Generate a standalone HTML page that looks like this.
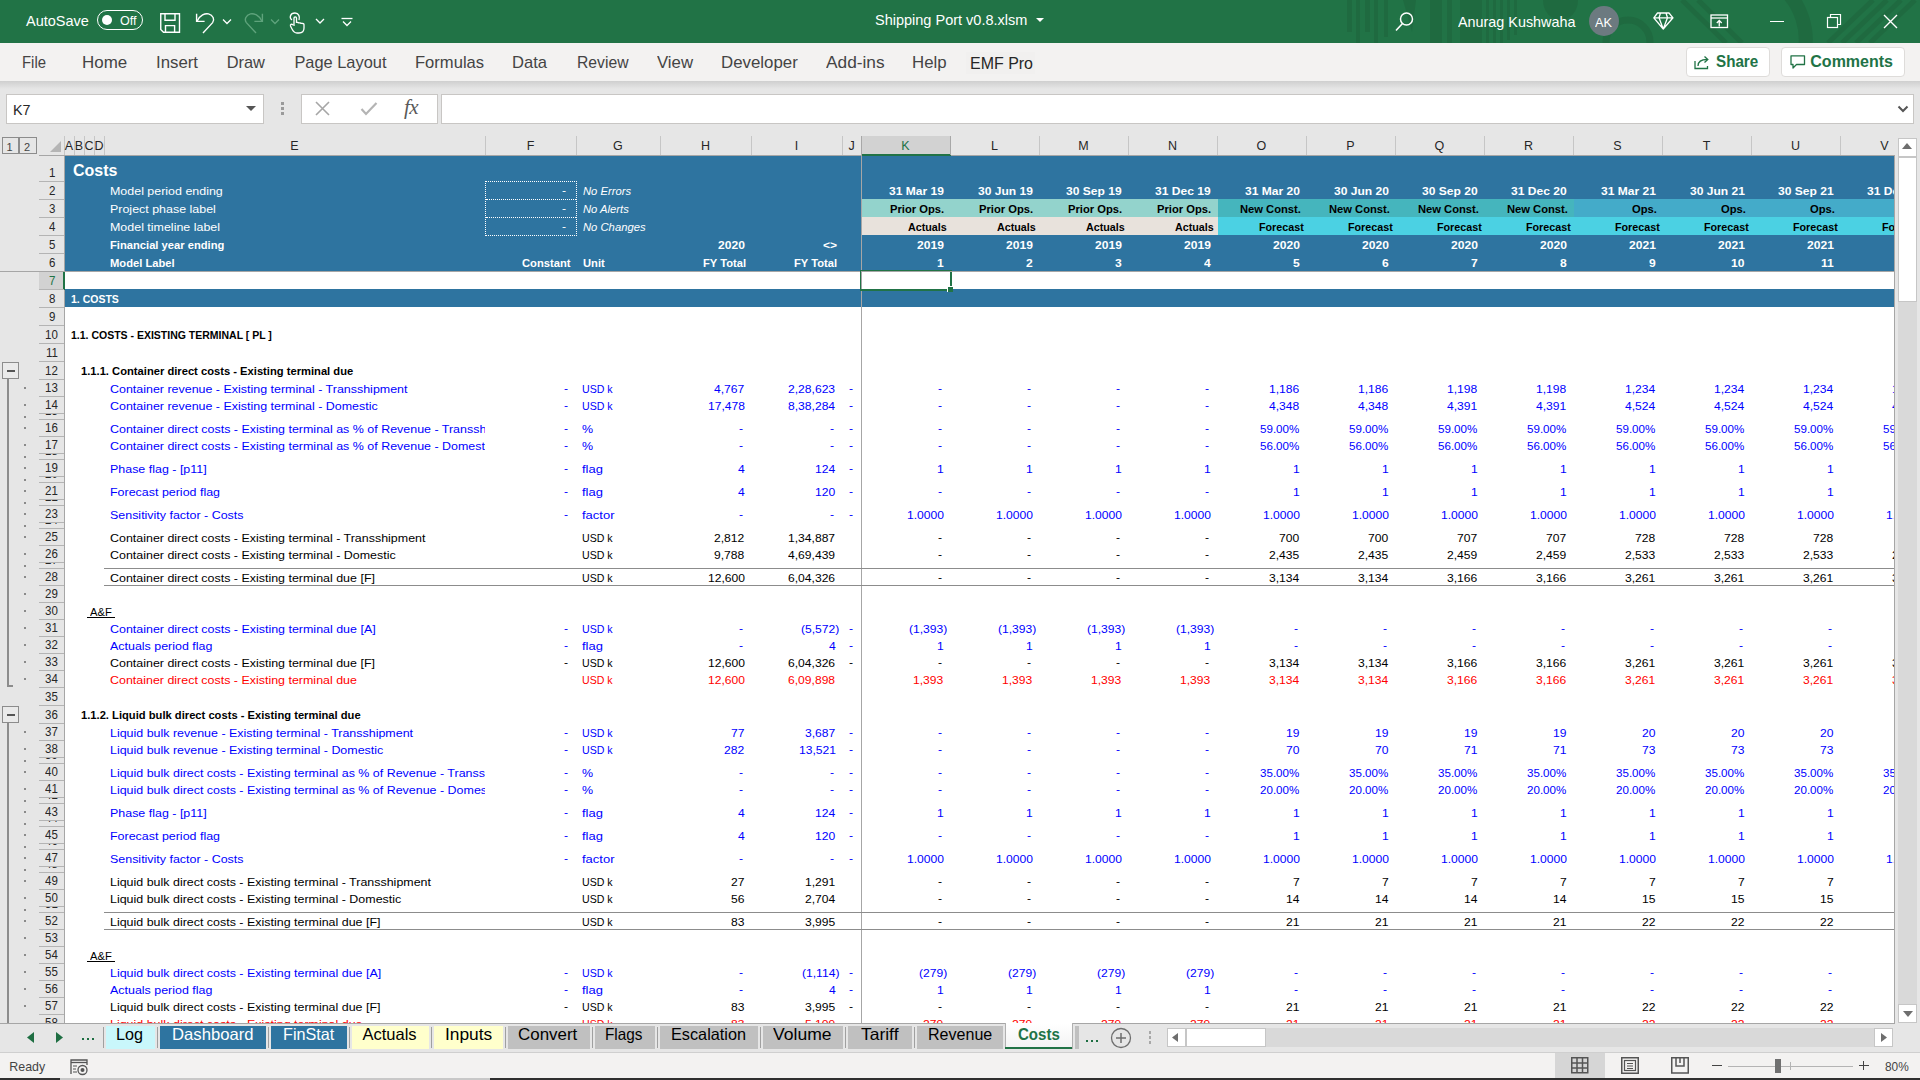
<!DOCTYPE html><html><head><meta charset="utf-8"><title>Shipping Port v0.8.xlsm - Excel</title><style>
html,body{margin:0;padding:0;width:1920px;height:1080px;overflow:hidden;background:#e6e6e6;}
body{position:relative;font-family:"Liberation Sans", sans-serif;}
.t{position:absolute;white-space:nowrap;line-height:20px;height:20px;}
.r{position:absolute;}
svg{position:absolute;overflow:visible;}
</style></head><body>
<div class="r" style="left:0px;top:0px;width:1920px;height:43px;background:#217346;"></div>
<svg style="left:0;top:0" width="1920" height="43" viewBox="0 0 1920 43"><g fill="#1f6a40"><rect x="1347" y="0" width="5" height="32"/><rect x="1356" y="0" width="4" height="43"/><rect x="1365" y="0" width="5" height="32"/><rect x="1374" y="0" width="4" height="43"/><rect x="1384" y="0" width="4" height="37"/><path d="M1403 0 H1416 L1412 32 Z"/><rect x="1430" y="0" width="12" height="43"/><rect x="1447" y="0" width="5" height="43"/><rect x="1460" y="0" width="22" height="43"/><rect x="1486" y="0" width="3" height="43"/><rect x="1493" y="0" width="3" height="43"/><rect x="1500" y="0" width="3" height="43"/><rect x="1507" y="0" width="3" height="40"/><rect x="1514" y="0" width="3" height="35"/><path d="M1543 0 H1578 A17.5 20 0 0 1 1543 0 Z"/></g><circle cx="1628" cy="42" r="22" fill="none" stroke="#1f6a40" stroke-width="7"/><g stroke="#1f6a40" stroke-width="5"><line x1="1682" y1="0" x2="1726" y2="43"/><line x1="1698" y1="0" x2="1742" y2="43"/><line x1="1828" y1="43" x2="1873" y2="0"/><line x1="1842" y1="43" x2="1887" y2="0"/><line x1="1856" y1="43" x2="1901" y2="0"/><line x1="1870" y1="43" x2="1915" y2="0"/></g><path d="M1785 -10 A70 70 0 0 1 1805 50" fill="none" stroke="#1f6a40" stroke-width="14"/></svg>
<div class="t" style="left:26px;top:11px;font-size:14.5px;color:#ffffff;">AutoSave</div>
<div class="r" style="left:97px;top:10px;width:44px;height:18px;border:1.5px solid #fff;border-radius:11px;"></div>
<div class="r" style="left:102px;top:15px;width:10px;height:10px;background:#fff;border-radius:50%;"></div>
<div class="t" style="left:120px;top:11px;font-size:13px;color:#ffffff;transform:scaleX(0.9649);transform-origin:0 0;">Off</div>
<svg style="left:160px;top:13px" width="21" height="21" viewBox="0 0 21 21"><path d="M0.75 0.75 H19.5 V19.3 H3.5 L0.75 16.5 Z" fill="none" stroke="#fff" stroke-width="1.4"/><path d="M5 0.75 V7.3 H15 V0.75" fill="none" stroke="#fff" stroke-width="1.4"/><path d="M5.5 19.3 V12.6 H14.6 V19.3" fill="none" stroke="#fff" stroke-width="1.4"/></svg>
<svg style="left:195px;top:13px" width="22" height="22" viewBox="0 0 22 22"><path d="M1.6 0.8 V8.4 H9.6" fill="none" stroke="#fff" stroke-width="1.4"/><path d="M2.2 8 C5 2 10 0.2 13.5 0.9 C18 2 20 6.5 17.6 9.6 L8 20" fill="none" stroke="#fff" stroke-width="1.4"/></svg>
<svg style="left:222px;top:18px" width="10" height="8" viewBox="0 0 10 8"><path d="M1 1.5 L5 5.5 L9 1.5" fill="none" stroke="#fff" stroke-width="1.3"/></svg>
<svg style="left:243px;top:13px" width="22" height="22" viewBox="0 0 22 22"><path d="M19.4 0.8 V8.4 H11.4" fill="none" stroke="#5fa37c" stroke-width="1.4"/><path d="M18.8 8 C16 2 11 0.2 7.5 0.9 C3 2 1 6.5 3.4 9.6 L13 20" fill="none" stroke="#5fa37c" stroke-width="1.4"/></svg>
<svg style="left:270px;top:18px" width="10" height="8" viewBox="0 0 10 8"><path d="M1 1.5 L5 5.5 L9 1.5" fill="none" stroke="#5fa37c" stroke-width="1.3"/></svg>
<svg style="left:288px;top:12px" width="18" height="22" viewBox="0 0 18 22"><path d="M4 8 C1 6 2 1 7 1 C11 1 12 5 11 8" fill="none" stroke="#fff" stroke-width="1.3"/><path d="M6 14 V6 C6 4.5 8.5 4.5 8.5 6 V11 C8.5 10 11 10 11 11.5 C11 10.5 13.5 10.5 13.5 12 C13.5 11 16 11 16 12.5 V16 C16 19 14 21 11 21 H9 C7 21 5 19 4 17 L2.5 14 C2 12.5 3.5 11.5 5 13" fill="none" stroke="#fff" stroke-width="1.3"/></svg>
<svg style="left:315px;top:17px" width="10" height="8" viewBox="0 0 10 8"><path d="M1 2 L5 6 L9 2" fill="none" stroke="#fff" stroke-width="1.3"/></svg>
<svg style="left:340px;top:14px" width="14" height="14" viewBox="0 0 14 14"><path d="M1.5 4.5 H12.5" stroke="#fff" stroke-width="1.3"/><path d="M3 7.5 L7 11.5 L11 7.5" fill="none" stroke="#fff" stroke-width="1.3"/></svg>
<div class="t" style="left:875px;top:10px;font-size:14.5px;color:#ffffff;">Shipping Port v0.8.xlsm</div>
<svg style="left:1036px;top:18px" width="8" height="5" viewBox="0 0 8 5"><path d="M0 0 H8 L4 4 Z" fill="#fff"/></svg>
<svg style="left:1394px;top:11px" width="22" height="22" viewBox="0 0 22 22"><circle cx="12.5" cy="8" r="6" fill="none" stroke="#fff" stroke-width="1.5"/><path d="M8.5 12.5 L2 19.5" stroke="#fff" stroke-width="1.6"/></svg>
<div class="t" style="left:1458px;top:12px;font-size:14.5px;color:#ffffff;transform:scaleX(0.9907);transform-origin:0 0;">Anurag Kushwaha</div>
<div class="r" style="left:1589px;top:6px;width:30px;height:30px;border-radius:50%;background:#6c7a80;"></div>
<div class="t" style="left:1595px;top:13px;font-size:13px;color:#ffffff;transform:scaleX(0.9803);transform-origin:0 0;">AK</div>
<svg style="left:1653px;top:12px" width="21" height="18" viewBox="0 0 21 18"><path d="M4.5 1 H16 L20 5.8 L10.25 17 L0.8 5.8 Z M0.8 5.8 H20 M7.5 1 L6 5.8 L10.25 17 L14.5 5.8 L13 1" fill="none" stroke="#fff" stroke-width="1.3" stroke-linejoin="round"/></svg>
<svg style="left:1710px;top:14px" width="19" height="15" viewBox="0 0 19 15"><rect x="1" y="1" width="16.5" height="12.5" fill="none" stroke="#fff" stroke-width="1.3"/><path d="M1 4 H17.5" stroke="#fff" stroke-width="1.3"/><path d="M9.25 12.5 V6.5 M6.8 9 L9.25 6.5 L11.7 9" fill="none" stroke="#fff" stroke-width="1.3"/></svg>
<div class="r" style="left:1770px;top:21px;width:14px;height:1px;background:#ffffff;"></div>
<svg style="left:1826px;top:13px" width="16" height="16" viewBox="0 0 16 16"><rect x="1.5" y="4.5" width="10" height="10" fill="none" stroke="#fff" stroke-width="1.2"/><path d="M4.5 4.5 V1.5 H14.5 V11.5 H11.5" fill="none" stroke="#fff" stroke-width="1.2"/></svg>
<svg style="left:1883px;top:14px" width="15" height="15" viewBox="0 0 15 15"><path d="M1 1 L14 14 M14 1 L1 14" stroke="#fff" stroke-width="1.4"/></svg>
<div class="r" style="left:0px;top:43px;width:1920px;height:38px;background:#f3f2f1;"></div>
<div class="r" style="left:0;top:81px;width:1920px;height:8px;background:linear-gradient(#cfcfcf,#e6e6e6);"></div>
<div class="t" style="left:21.5px;top:52px;font-size:16.4px;color:#444444;transform:scaleX(0.9082);transform-origin:0 0;">File</div>
<div class="t" style="left:82.3px;top:52px;font-size:16.4px;color:#444444;transform:scaleX(1.0332);transform-origin:0 0;">Home</div>
<div class="t" style="left:156px;top:52px;font-size:16.4px;color:#444444;transform:scaleX(1.0240);transform-origin:0 0;">Insert</div>
<div class="t" style="left:226.7px;top:52px;font-size:16.4px;color:#444444;">Draw</div>
<div class="t" style="left:294.4px;top:52px;font-size:16.4px;color:#444444;">Page Layout</div>
<div class="t" style="left:414.7px;top:52px;font-size:16.4px;color:#444444;transform:scaleX(1.0110);transform-origin:0 0;">Formulas</div>
<div class="t" style="left:512px;top:52px;font-size:16.4px;color:#444444;transform:scaleX(1.0103);transform-origin:0 0;">Data</div>
<div class="t" style="left:576.5px;top:52px;font-size:16.4px;color:#444444;transform:scaleX(0.9577);transform-origin:0 0;">Review</div>
<div class="t" style="left:657px;top:52px;font-size:16.4px;color:#444444;transform:scaleX(1.0213);transform-origin:0 0;">View</div>
<div class="t" style="left:721px;top:52px;font-size:16.4px;color:#444444;transform:scaleX(1.0274);transform-origin:0 0;">Developer</div>
<div class="t" style="left:826px;top:52px;font-size:16.4px;color:#444444;transform:scaleX(1.0538);transform-origin:0 0;">Add-ins</div>
<div class="t" style="left:912px;top:52px;font-size:16.4px;color:#444444;transform:scaleX(1.0258);transform-origin:0 0;">Help</div>
<div class="r" style="left:966px;top:52px;width:69px;height:22px;background:#f1f0ef;"></div>
<div class="t" style="left:969.6px;top:53px;font-size:16.4px;color:#262626;transform:scaleX(0.9738);transform-origin:0 0;">EMF Pro</div>
<div class="r" style="left:1686px;top:47px;width:82px;height:28px;background:#fff;border:1px solid #dedcda;border-radius:4px;"></div>
<svg style="left:1694px;top:53px" width="16" height="17" viewBox="0 0 16 17"><path d="M1 8 V15.5 H13.5 V13" fill="none" stroke="#217346" stroke-width="1.3"/><path d="M4 13 C4 8.5 7 6.5 13 6.5" fill="none" stroke="#217346" stroke-width="1.3"/><path d="M10.5 3.5 L13.8 6.5 L10.5 9.5" fill="none" stroke="#217346" stroke-width="1.3"/></svg>
<div class="t" style="left:1715.5px;top:52px;font-size:16px;color:#217346;font-weight:bold;transform:scaleX(0.9490);transform-origin:0 0;">Share</div>
<div class="r" style="left:1781px;top:47px;width:122px;height:28px;background:#fff;border:1px solid #dedcda;border-radius:4px;"></div>
<svg style="left:1790px;top:55px" width="16" height="15" viewBox="0 0 16 15"><path d="M1 0.8 H14.5 V9.5 H6.5 L3 13 V9.5 H1 Z" fill="none" stroke="#217346" stroke-width="1.3" stroke-linejoin="round"/></svg>
<div class="t" style="left:1810.3px;top:52px;font-size:16px;color:#217346;font-weight:bold;">Comments</div>
<div class="r" style="left:6px;top:94px;width:256px;height:28px;background:#fff;border:1px solid #c8c6c4;"></div>
<div class="t" style="left:13px;top:100px;font-size:15px;color:#262626;transform:scaleX(0.9538);transform-origin:0 0;">K7</div>
<svg style="left:246px;top:106px" width="10" height="6" viewBox="0 0 10 6"><path d="M0 0 H10 L5 5 Z" fill="#555"/></svg>
<div class="r" style="left:281px;top:102px;width:3px;height:3px;background:#9a9a9a;"></div>
<div class="r" style="left:281px;top:107px;width:3px;height:3px;background:#9a9a9a;"></div>
<div class="r" style="left:281px;top:112px;width:3px;height:3px;background:#9a9a9a;"></div>
<div class="r" style="left:301px;top:94px;width:135px;height:28px;background:#fff;border:1px solid #c8c6c4;"></div>
<svg style="left:315px;top:101px" width="15" height="15" viewBox="0 0 15 15"><path d="M1 1 L14 14 M14 1 L1 14" stroke="#a6a6a6" stroke-width="1.6"/></svg>
<svg style="left:360px;top:101px" width="18" height="15" viewBox="0 0 18 15"><path d="M1.5 8 L6 13 L16.5 2" fill="none" stroke="#b4b4b4" stroke-width="2.2"/></svg>
<div class="t" style="left:404px;top:97px;font-family:'Liberation Serif',serif;font-style:italic;font-size:21px;color:#5a5a5a;letter-spacing:-0.5px;">fx</div>
<div class="r" style="left:441px;top:94px;width:1471px;height:28px;background:#fff;border:1px solid #c8c6c4;"></div>
<svg style="left:1897px;top:105px" width="12" height="8" viewBox="0 0 12 8"><path d="M1.5 1.5 L6 6 L10.5 1.5" fill="none" stroke="#555" stroke-width="2"/></svg>
<div class="r" style="left:0px;top:124px;width:1920px;height:12px;background:#e6e6e6;"></div>
<div class="r" style="left:39px;top:136px;width:1855px;height:19px;background:#e6e6e6;"></div>
<div class="r" style="left:39px;top:155px;width:1855px;height:1px;background:#a6a6a6;"></div>
<div class="r" style="left:64px;top:136px;width:1px;height:19px;background:#c6c6c6;"></div>
<div class="t" style="left:64.8px;top:136px;font-size:12.5px;color:#262626;">A</div>
<div class="r" style="left:74px;top:136px;width:1px;height:19px;background:#c6c6c6;"></div>
<div class="t" style="left:74.8px;top:136px;font-size:12.5px;color:#262626;">B</div>
<div class="r" style="left:84px;top:136px;width:1px;height:19px;background:#c6c6c6;"></div>
<div class="t" style="left:84.5px;top:136px;font-size:12.5px;color:#262626;">C</div>
<div class="r" style="left:94px;top:136px;width:1px;height:19px;background:#c6c6c6;"></div>
<div class="t" style="left:94.5px;top:136px;font-size:12.5px;color:#262626;">D</div>
<div class="r" style="left:104px;top:136px;width:1px;height:19px;background:#c6c6c6;"></div>
<div class="t" style="left:290.3px;top:136px;font-size:12.5px;color:#262626;">E</div>
<div class="r" style="left:485px;top:136px;width:1px;height:19px;background:#c6c6c6;"></div>
<div class="t" style="left:526.7px;top:136px;font-size:12.5px;color:#262626;">F</div>
<div class="r" style="left:576px;top:136px;width:1px;height:19px;background:#c6c6c6;"></div>
<div class="t" style="left:613.1px;top:136px;font-size:12.5px;color:#262626;">G</div>
<div class="r" style="left:660px;top:136px;width:1px;height:19px;background:#c6c6c6;"></div>
<div class="t" style="left:701.0px;top:136px;font-size:12.5px;color:#262626;">H</div>
<div class="r" style="left:751px;top:136px;width:1px;height:19px;background:#c6c6c6;"></div>
<div class="t" style="left:794.8px;top:136px;font-size:12.5px;color:#262626;">I</div>
<div class="r" style="left:842px;top:136px;width:1px;height:19px;background:#c6c6c6;"></div>
<div class="t" style="left:848.4px;top:136px;font-size:12.5px;color:#262626;">J</div>
<div class="r" style="left:862px;top:136px;width:88px;height:19px;background:#d2d2d2;"></div>
<div class="r" style="left:862px;top:154px;width:89px;height:2px;background:#217346;"></div>
<div class="r" style="left:861px;top:136px;width:1px;height:19px;background:#a8a8a8;"></div>
<div class="t" style="left:901.3px;top:136px;font-size:12.5px;color:#217346;">K</div>
<div class="r" style="left:950px;top:136px;width:1px;height:19px;background:#a8a8a8;"></div>
<div class="t" style="left:991.0px;top:136px;font-size:12.5px;color:#262626;">L</div>
<div class="r" style="left:1039px;top:136px;width:1px;height:19px;background:#c6c6c6;"></div>
<div class="t" style="left:1078.3px;top:136px;font-size:12.5px;color:#262626;">M</div>
<div class="r" style="left:1128px;top:136px;width:1px;height:19px;background:#c6c6c6;"></div>
<div class="t" style="left:1168.0px;top:136px;font-size:12.5px;color:#262626;">N</div>
<div class="r" style="left:1217px;top:136px;width:1px;height:19px;background:#c6c6c6;"></div>
<div class="t" style="left:1256.6px;top:136px;font-size:12.5px;color:#262626;">O</div>
<div class="r" style="left:1306px;top:136px;width:1px;height:19px;background:#c6c6c6;"></div>
<div class="t" style="left:1346.3px;top:136px;font-size:12.5px;color:#262626;">P</div>
<div class="r" style="left:1395px;top:136px;width:1px;height:19px;background:#c6c6c6;"></div>
<div class="t" style="left:1434.6px;top:136px;font-size:12.5px;color:#262626;">Q</div>
<div class="r" style="left:1484px;top:136px;width:1px;height:19px;background:#c6c6c6;"></div>
<div class="t" style="left:1524.0px;top:136px;font-size:12.5px;color:#262626;">R</div>
<div class="r" style="left:1573px;top:136px;width:1px;height:19px;background:#c6c6c6;"></div>
<div class="t" style="left:1613.3px;top:136px;font-size:12.5px;color:#262626;">S</div>
<div class="r" style="left:1662px;top:136px;width:1px;height:19px;background:#c6c6c6;"></div>
<div class="t" style="left:1702.7px;top:136px;font-size:12.5px;color:#262626;">T</div>
<div class="r" style="left:1751px;top:136px;width:1px;height:19px;background:#c6c6c6;"></div>
<div class="t" style="left:1791.0px;top:136px;font-size:12.5px;color:#262626;">U</div>
<div class="r" style="left:1840px;top:136px;width:1px;height:19px;background:#c6c6c6;"></div>
<div class="t" style="left:1880.3px;top:136px;font-size:12.5px;color:#262626;">V</div>
<div class="r" style="left:1840px;top:137px;width:1px;height:18px;background:#c6c6c6;"></div>
<div class="r" style="left:2px;top:137px;width:15px;height:15px;border:1px solid #8c8c8c;"></div>
<div class="r" style="left:19px;top:137px;width:16px;height:15px;border:1px solid #8c8c8c;"></div>
<div class="r" style="left:18px;top:137px;width:1px;height:17px;background:#8c8c8c;"></div>
<div class="t" style="left:6.5px;top:137px;font-size:11px;color:#444;">1</div>
<div class="t" style="left:24px;top:137px;font-size:11px;color:#444;">2</div>
<svg style="left:49px;top:140px" width="13" height="13" viewBox="0 0 13 13"><path d="M1 12 H12 V1 Z" fill="#b5b5b5"/></svg>
<div class="r" style="left:0px;top:156px;width:64px;height:867px;background:#e6e6e6;"></div>
<div class="r" style="left:64px;top:156px;width:1px;height:867px;background:#a6a6a6;"></div>
<div class="r" style="left:39px;top:181px;width:25px;height:1px;background:#b4b4b4;"></div>
<div class="r" style="left:39px;top:156px;width:24px;height:25px;overflow:hidden;"><div class="t" style="left:9.6px;top:7px;font-size:12.8px;color:#262626;transform:scaleX(0.9);transform-origin:0 0;">1</div></div>
<div class="r" style="left:39px;top:199px;width:25px;height:1px;background:#b4b4b4;"></div>
<div class="r" style="left:39px;top:182px;width:24px;height:17px;overflow:hidden;"><div class="t" style="left:9.6px;top:-1px;font-size:12.8px;color:#262626;transform:scaleX(0.9);transform-origin:0 0;">2</div></div>
<div class="r" style="left:39px;top:217px;width:25px;height:1px;background:#b4b4b4;"></div>
<div class="r" style="left:39px;top:200px;width:24px;height:17px;overflow:hidden;"><div class="t" style="left:9.6px;top:-1px;font-size:12.8px;color:#262626;transform:scaleX(0.9);transform-origin:0 0;">3</div></div>
<div class="r" style="left:39px;top:235px;width:25px;height:1px;background:#b4b4b4;"></div>
<div class="r" style="left:39px;top:218px;width:24px;height:17px;overflow:hidden;"><div class="t" style="left:9.6px;top:-1px;font-size:12.8px;color:#262626;transform:scaleX(0.9);transform-origin:0 0;">4</div></div>
<div class="r" style="left:39px;top:253px;width:25px;height:1px;background:#b4b4b4;"></div>
<div class="r" style="left:39px;top:236px;width:24px;height:17px;overflow:hidden;"><div class="t" style="left:9.6px;top:-1px;font-size:12.8px;color:#262626;transform:scaleX(0.9);transform-origin:0 0;">5</div></div>
<div class="r" style="left:39px;top:254px;width:24px;height:17px;overflow:hidden;"><div class="t" style="left:9.6px;top:-1px;font-size:12.8px;color:#262626;transform:scaleX(0.9);transform-origin:0 0;">6</div></div>
<div class="r" style="left:39px;top:272px;width:25px;height:17px;background:#d2d2d2;"></div>
<div class="r" style="left:63px;top:272px;width:2px;height:18px;background:#217346;"></div>
<div class="r" style="left:39px;top:289px;width:25px;height:1px;background:#b4b4b4;"></div>
<div class="r" style="left:39px;top:272px;width:24px;height:17px;overflow:hidden;"><div class="t" style="left:9.6px;top:-1px;font-size:12.8px;color:#217346;transform:scaleX(0.9);transform-origin:0 0;">7</div></div>
<div class="r" style="left:39px;top:307px;width:25px;height:1px;background:#b4b4b4;"></div>
<div class="r" style="left:39px;top:290px;width:24px;height:17px;overflow:hidden;"><div class="t" style="left:9.6px;top:-1px;font-size:12.8px;color:#262626;transform:scaleX(0.9);transform-origin:0 0;">8</div></div>
<div class="r" style="left:39px;top:325px;width:25px;height:1px;background:#b4b4b4;"></div>
<div class="r" style="left:39px;top:308px;width:24px;height:17px;overflow:hidden;"><div class="t" style="left:9.6px;top:-1px;font-size:12.8px;color:#262626;transform:scaleX(0.9);transform-origin:0 0;">9</div></div>
<div class="r" style="left:39px;top:343px;width:25px;height:1px;background:#b4b4b4;"></div>
<div class="r" style="left:39px;top:326px;width:24px;height:17px;overflow:hidden;"><div class="t" style="left:6.4px;top:-1px;font-size:12.8px;color:#262626;transform:scaleX(0.9);transform-origin:0 0;">10</div></div>
<div class="r" style="left:39px;top:361px;width:25px;height:1px;background:#b4b4b4;"></div>
<div class="r" style="left:39px;top:344px;width:24px;height:17px;overflow:hidden;"><div class="t" style="left:6.8px;top:-1px;font-size:12.8px;color:#262626;transform:scaleX(0.9);transform-origin:0 0;">11</div></div>
<div class="r" style="left:39px;top:379px;width:25px;height:1px;background:#b4b4b4;"></div>
<div class="r" style="left:39px;top:362px;width:24px;height:17px;overflow:hidden;"><div class="t" style="left:6.4px;top:-1px;font-size:12.8px;color:#262626;transform:scaleX(0.9);transform-origin:0 0;">12</div></div>
<div class="r" style="left:39px;top:396px;width:25px;height:1px;background:#b4b4b4;"></div>
<div class="r" style="left:39px;top:380px;width:24px;height:16px;overflow:hidden;"><div class="t" style="left:6.4px;top:-2px;font-size:12.8px;color:#262626;transform:scaleX(0.9);transform-origin:0 0;">13</div></div>
<div class="r" style="left:39px;top:413px;width:25px;height:1px;background:#b4b4b4;"></div>
<div class="r" style="left:39px;top:397px;width:24px;height:16px;overflow:hidden;"><div class="t" style="left:6.4px;top:-2px;font-size:12.8px;color:#262626;transform:scaleX(0.9);transform-origin:0 0;">14</div></div>
<div class="r" style="left:39px;top:419px;width:25px;height:1px;background:#b4b4b4;"></div>
<div class="r" style="left:39px;top:414px;width:24px;height:5px;overflow:hidden;"><div class="t" style="left:6.4px;top:-13px;font-size:12.8px;color:#262626;transform:scaleX(0.9);transform-origin:0 0;">15</div></div>
<div class="r" style="left:39px;top:436px;width:25px;height:1px;background:#b4b4b4;"></div>
<div class="r" style="left:39px;top:420px;width:24px;height:16px;overflow:hidden;"><div class="t" style="left:6.4px;top:-2px;font-size:12.8px;color:#262626;transform:scaleX(0.9);transform-origin:0 0;">16</div></div>
<div class="r" style="left:39px;top:453px;width:25px;height:1px;background:#b4b4b4;"></div>
<div class="r" style="left:39px;top:437px;width:24px;height:16px;overflow:hidden;"><div class="t" style="left:6.4px;top:-2px;font-size:12.8px;color:#262626;transform:scaleX(0.9);transform-origin:0 0;">17</div></div>
<div class="r" style="left:39px;top:459px;width:25px;height:1px;background:#b4b4b4;"></div>
<div class="r" style="left:39px;top:454px;width:24px;height:5px;overflow:hidden;"><div class="t" style="left:6.4px;top:-13px;font-size:12.8px;color:#262626;transform:scaleX(0.9);transform-origin:0 0;">18</div></div>
<div class="r" style="left:39px;top:476px;width:25px;height:1px;background:#b4b4b4;"></div>
<div class="r" style="left:39px;top:460px;width:24px;height:16px;overflow:hidden;"><div class="t" style="left:6.4px;top:-2px;font-size:12.8px;color:#262626;transform:scaleX(0.9);transform-origin:0 0;">19</div></div>
<div class="r" style="left:39px;top:482px;width:25px;height:1px;background:#b4b4b4;"></div>
<div class="r" style="left:39px;top:477px;width:24px;height:5px;overflow:hidden;"><div class="t" style="left:6.4px;top:-13px;font-size:12.8px;color:#262626;transform:scaleX(0.9);transform-origin:0 0;">20</div></div>
<div class="r" style="left:39px;top:499px;width:25px;height:1px;background:#b4b4b4;"></div>
<div class="r" style="left:39px;top:483px;width:24px;height:16px;overflow:hidden;"><div class="t" style="left:6.4px;top:-2px;font-size:12.8px;color:#262626;transform:scaleX(0.9);transform-origin:0 0;">21</div></div>
<div class="r" style="left:39px;top:505px;width:25px;height:1px;background:#b4b4b4;"></div>
<div class="r" style="left:39px;top:500px;width:24px;height:5px;overflow:hidden;"><div class="t" style="left:6.4px;top:-13px;font-size:12.8px;color:#262626;transform:scaleX(0.9);transform-origin:0 0;">22</div></div>
<div class="r" style="left:39px;top:522px;width:25px;height:1px;background:#b4b4b4;"></div>
<div class="r" style="left:39px;top:506px;width:24px;height:16px;overflow:hidden;"><div class="t" style="left:6.4px;top:-2px;font-size:12.8px;color:#262626;transform:scaleX(0.9);transform-origin:0 0;">23</div></div>
<div class="r" style="left:39px;top:528px;width:25px;height:1px;background:#b4b4b4;"></div>
<div class="r" style="left:39px;top:523px;width:24px;height:5px;overflow:hidden;"><div class="t" style="left:6.4px;top:-13px;font-size:12.8px;color:#262626;transform:scaleX(0.9);transform-origin:0 0;">24</div></div>
<div class="r" style="left:39px;top:545px;width:25px;height:1px;background:#b4b4b4;"></div>
<div class="r" style="left:39px;top:529px;width:24px;height:16px;overflow:hidden;"><div class="t" style="left:6.4px;top:-2px;font-size:12.8px;color:#262626;transform:scaleX(0.9);transform-origin:0 0;">25</div></div>
<div class="r" style="left:39px;top:562px;width:25px;height:1px;background:#b4b4b4;"></div>
<div class="r" style="left:39px;top:546px;width:24px;height:16px;overflow:hidden;"><div class="t" style="left:6.4px;top:-2px;font-size:12.8px;color:#262626;transform:scaleX(0.9);transform-origin:0 0;">26</div></div>
<div class="r" style="left:39px;top:568px;width:25px;height:1px;background:#b4b4b4;"></div>
<div class="r" style="left:39px;top:563px;width:24px;height:5px;overflow:hidden;"><div class="t" style="left:6.4px;top:-13px;font-size:12.8px;color:#262626;transform:scaleX(0.9);transform-origin:0 0;">27</div></div>
<div class="r" style="left:39px;top:585px;width:25px;height:1px;background:#b4b4b4;"></div>
<div class="r" style="left:39px;top:569px;width:24px;height:16px;overflow:hidden;"><div class="t" style="left:6.4px;top:-2px;font-size:12.8px;color:#262626;transform:scaleX(0.9);transform-origin:0 0;">28</div></div>
<div class="r" style="left:39px;top:602px;width:25px;height:1px;background:#b4b4b4;"></div>
<div class="r" style="left:39px;top:586px;width:24px;height:16px;overflow:hidden;"><div class="t" style="left:6.4px;top:-2px;font-size:12.8px;color:#262626;transform:scaleX(0.9);transform-origin:0 0;">29</div></div>
<div class="r" style="left:39px;top:619px;width:25px;height:1px;background:#b4b4b4;"></div>
<div class="r" style="left:39px;top:603px;width:24px;height:16px;overflow:hidden;"><div class="t" style="left:6.4px;top:-2px;font-size:12.8px;color:#262626;transform:scaleX(0.9);transform-origin:0 0;">30</div></div>
<div class="r" style="left:39px;top:636px;width:25px;height:1px;background:#b4b4b4;"></div>
<div class="r" style="left:39px;top:620px;width:24px;height:16px;overflow:hidden;"><div class="t" style="left:6.4px;top:-2px;font-size:12.8px;color:#262626;transform:scaleX(0.9);transform-origin:0 0;">31</div></div>
<div class="r" style="left:39px;top:653px;width:25px;height:1px;background:#b4b4b4;"></div>
<div class="r" style="left:39px;top:637px;width:24px;height:16px;overflow:hidden;"><div class="t" style="left:6.4px;top:-2px;font-size:12.8px;color:#262626;transform:scaleX(0.9);transform-origin:0 0;">32</div></div>
<div class="r" style="left:39px;top:670px;width:25px;height:1px;background:#b4b4b4;"></div>
<div class="r" style="left:39px;top:654px;width:24px;height:16px;overflow:hidden;"><div class="t" style="left:6.4px;top:-2px;font-size:12.8px;color:#262626;transform:scaleX(0.9);transform-origin:0 0;">33</div></div>
<div class="r" style="left:39px;top:687px;width:25px;height:1px;background:#b4b4b4;"></div>
<div class="r" style="left:39px;top:671px;width:24px;height:16px;overflow:hidden;"><div class="t" style="left:6.4px;top:-2px;font-size:12.8px;color:#262626;transform:scaleX(0.9);transform-origin:0 0;">34</div></div>
<div class="r" style="left:39px;top:705px;width:25px;height:1px;background:#b4b4b4;"></div>
<div class="r" style="left:39px;top:688px;width:24px;height:17px;overflow:hidden;"><div class="t" style="left:6.4px;top:-1px;font-size:12.8px;color:#262626;transform:scaleX(0.9);transform-origin:0 0;">35</div></div>
<div class="r" style="left:39px;top:723px;width:25px;height:1px;background:#b4b4b4;"></div>
<div class="r" style="left:39px;top:706px;width:24px;height:17px;overflow:hidden;"><div class="t" style="left:6.4px;top:-1px;font-size:12.8px;color:#262626;transform:scaleX(0.9);transform-origin:0 0;">36</div></div>
<div class="r" style="left:39px;top:740px;width:25px;height:1px;background:#b4b4b4;"></div>
<div class="r" style="left:39px;top:724px;width:24px;height:16px;overflow:hidden;"><div class="t" style="left:6.4px;top:-2px;font-size:12.8px;color:#262626;transform:scaleX(0.9);transform-origin:0 0;">37</div></div>
<div class="r" style="left:39px;top:757px;width:25px;height:1px;background:#b4b4b4;"></div>
<div class="r" style="left:39px;top:741px;width:24px;height:16px;overflow:hidden;"><div class="t" style="left:6.4px;top:-2px;font-size:12.8px;color:#262626;transform:scaleX(0.9);transform-origin:0 0;">38</div></div>
<div class="r" style="left:39px;top:763px;width:25px;height:1px;background:#b4b4b4;"></div>
<div class="r" style="left:39px;top:758px;width:24px;height:5px;overflow:hidden;"><div class="t" style="left:6.4px;top:-13px;font-size:12.8px;color:#262626;transform:scaleX(0.9);transform-origin:0 0;">39</div></div>
<div class="r" style="left:39px;top:780px;width:25px;height:1px;background:#b4b4b4;"></div>
<div class="r" style="left:39px;top:764px;width:24px;height:16px;overflow:hidden;"><div class="t" style="left:6.4px;top:-2px;font-size:12.8px;color:#262626;transform:scaleX(0.9);transform-origin:0 0;">40</div></div>
<div class="r" style="left:39px;top:797px;width:25px;height:1px;background:#b4b4b4;"></div>
<div class="r" style="left:39px;top:781px;width:24px;height:16px;overflow:hidden;"><div class="t" style="left:6.4px;top:-2px;font-size:12.8px;color:#262626;transform:scaleX(0.9);transform-origin:0 0;">41</div></div>
<div class="r" style="left:39px;top:803px;width:25px;height:1px;background:#b4b4b4;"></div>
<div class="r" style="left:39px;top:798px;width:24px;height:5px;overflow:hidden;"><div class="t" style="left:6.4px;top:-13px;font-size:12.8px;color:#262626;transform:scaleX(0.9);transform-origin:0 0;">42</div></div>
<div class="r" style="left:39px;top:820px;width:25px;height:1px;background:#b4b4b4;"></div>
<div class="r" style="left:39px;top:804px;width:24px;height:16px;overflow:hidden;"><div class="t" style="left:6.4px;top:-2px;font-size:12.8px;color:#262626;transform:scaleX(0.9);transform-origin:0 0;">43</div></div>
<div class="r" style="left:39px;top:826px;width:25px;height:1px;background:#b4b4b4;"></div>
<div class="r" style="left:39px;top:821px;width:24px;height:5px;overflow:hidden;"><div class="t" style="left:6.4px;top:-13px;font-size:12.8px;color:#262626;transform:scaleX(0.9);transform-origin:0 0;">44</div></div>
<div class="r" style="left:39px;top:843px;width:25px;height:1px;background:#b4b4b4;"></div>
<div class="r" style="left:39px;top:827px;width:24px;height:16px;overflow:hidden;"><div class="t" style="left:6.4px;top:-2px;font-size:12.8px;color:#262626;transform:scaleX(0.9);transform-origin:0 0;">45</div></div>
<div class="r" style="left:39px;top:849px;width:25px;height:1px;background:#b4b4b4;"></div>
<div class="r" style="left:39px;top:844px;width:24px;height:5px;overflow:hidden;"><div class="t" style="left:6.4px;top:-13px;font-size:12.8px;color:#262626;transform:scaleX(0.9);transform-origin:0 0;">46</div></div>
<div class="r" style="left:39px;top:866px;width:25px;height:1px;background:#b4b4b4;"></div>
<div class="r" style="left:39px;top:850px;width:24px;height:16px;overflow:hidden;"><div class="t" style="left:6.4px;top:-2px;font-size:12.8px;color:#262626;transform:scaleX(0.9);transform-origin:0 0;">47</div></div>
<div class="r" style="left:39px;top:872px;width:25px;height:1px;background:#b4b4b4;"></div>
<div class="r" style="left:39px;top:867px;width:24px;height:5px;overflow:hidden;"><div class="t" style="left:6.4px;top:-13px;font-size:12.8px;color:#262626;transform:scaleX(0.9);transform-origin:0 0;">48</div></div>
<div class="r" style="left:39px;top:889px;width:25px;height:1px;background:#b4b4b4;"></div>
<div class="r" style="left:39px;top:873px;width:24px;height:16px;overflow:hidden;"><div class="t" style="left:6.4px;top:-2px;font-size:12.8px;color:#262626;transform:scaleX(0.9);transform-origin:0 0;">49</div></div>
<div class="r" style="left:39px;top:906px;width:25px;height:1px;background:#b4b4b4;"></div>
<div class="r" style="left:39px;top:890px;width:24px;height:16px;overflow:hidden;"><div class="t" style="left:6.4px;top:-2px;font-size:12.8px;color:#262626;transform:scaleX(0.9);transform-origin:0 0;">50</div></div>
<div class="r" style="left:39px;top:912px;width:25px;height:1px;background:#b4b4b4;"></div>
<div class="r" style="left:39px;top:907px;width:24px;height:5px;overflow:hidden;"><div class="t" style="left:6.4px;top:-13px;font-size:12.8px;color:#262626;transform:scaleX(0.9);transform-origin:0 0;">51</div></div>
<div class="r" style="left:39px;top:929px;width:25px;height:1px;background:#b4b4b4;"></div>
<div class="r" style="left:39px;top:913px;width:24px;height:16px;overflow:hidden;"><div class="t" style="left:6.4px;top:-2px;font-size:12.8px;color:#262626;transform:scaleX(0.9);transform-origin:0 0;">52</div></div>
<div class="r" style="left:39px;top:946px;width:25px;height:1px;background:#b4b4b4;"></div>
<div class="r" style="left:39px;top:930px;width:24px;height:16px;overflow:hidden;"><div class="t" style="left:6.4px;top:-2px;font-size:12.8px;color:#262626;transform:scaleX(0.9);transform-origin:0 0;">53</div></div>
<div class="r" style="left:39px;top:963px;width:25px;height:1px;background:#b4b4b4;"></div>
<div class="r" style="left:39px;top:947px;width:24px;height:16px;overflow:hidden;"><div class="t" style="left:6.4px;top:-2px;font-size:12.8px;color:#262626;transform:scaleX(0.9);transform-origin:0 0;">54</div></div>
<div class="r" style="left:39px;top:980px;width:25px;height:1px;background:#b4b4b4;"></div>
<div class="r" style="left:39px;top:964px;width:24px;height:16px;overflow:hidden;"><div class="t" style="left:6.4px;top:-2px;font-size:12.8px;color:#262626;transform:scaleX(0.9);transform-origin:0 0;">55</div></div>
<div class="r" style="left:39px;top:997px;width:25px;height:1px;background:#b4b4b4;"></div>
<div class="r" style="left:39px;top:981px;width:24px;height:16px;overflow:hidden;"><div class="t" style="left:6.4px;top:-2px;font-size:12.8px;color:#262626;transform:scaleX(0.9);transform-origin:0 0;">56</div></div>
<div class="r" style="left:39px;top:1014px;width:25px;height:1px;background:#b4b4b4;"></div>
<div class="r" style="left:39px;top:998px;width:24px;height:16px;overflow:hidden;"><div class="t" style="left:6.4px;top:-2px;font-size:12.8px;color:#262626;transform:scaleX(0.9);transform-origin:0 0;">57</div></div>
<div class="r" style="left:39px;top:1015px;width:24px;height:8px;overflow:hidden;"><div class="t" style="left:6.4px;top:-2px;font-size:12.8px;color:#262626;transform:scaleX(0.9);transform-origin:0 0;">58</div></div>
<div class="r" style="left:0px;top:271px;width:1894px;height:1px;background:#a6a6a6;"></div>
<div class="r" style="left:24px;top:387px;width:2px;height:2px;background:#8a8a8a;"></div>
<div class="r" style="left:24px;top:404px;width:2px;height:2px;background:#8a8a8a;"></div>
<div class="r" style="left:24px;top:416px;width:2px;height:2px;background:#8a8a8a;"></div>
<div class="r" style="left:24px;top:427px;width:2px;height:2px;background:#8a8a8a;"></div>
<div class="r" style="left:24px;top:444px;width:2px;height:2px;background:#8a8a8a;"></div>
<div class="r" style="left:24px;top:456px;width:2px;height:2px;background:#8a8a8a;"></div>
<div class="r" style="left:24px;top:467px;width:2px;height:2px;background:#8a8a8a;"></div>
<div class="r" style="left:24px;top:479px;width:2px;height:2px;background:#8a8a8a;"></div>
<div class="r" style="left:24px;top:490px;width:2px;height:2px;background:#8a8a8a;"></div>
<div class="r" style="left:24px;top:502px;width:2px;height:2px;background:#8a8a8a;"></div>
<div class="r" style="left:24px;top:513px;width:2px;height:2px;background:#8a8a8a;"></div>
<div class="r" style="left:24px;top:525px;width:2px;height:2px;background:#8a8a8a;"></div>
<div class="r" style="left:24px;top:536px;width:2px;height:2px;background:#8a8a8a;"></div>
<div class="r" style="left:24px;top:553px;width:2px;height:2px;background:#8a8a8a;"></div>
<div class="r" style="left:24px;top:565px;width:2px;height:2px;background:#8a8a8a;"></div>
<div class="r" style="left:24px;top:576px;width:2px;height:2px;background:#8a8a8a;"></div>
<div class="r" style="left:24px;top:593px;width:2px;height:2px;background:#8a8a8a;"></div>
<div class="r" style="left:24px;top:610px;width:2px;height:2px;background:#8a8a8a;"></div>
<div class="r" style="left:24px;top:627px;width:2px;height:2px;background:#8a8a8a;"></div>
<div class="r" style="left:24px;top:644px;width:2px;height:2px;background:#8a8a8a;"></div>
<div class="r" style="left:24px;top:661px;width:2px;height:2px;background:#8a8a8a;"></div>
<div class="r" style="left:24px;top:678px;width:2px;height:2px;background:#8a8a8a;"></div>
<div class="r" style="left:24px;top:731px;width:2px;height:2px;background:#8a8a8a;"></div>
<div class="r" style="left:24px;top:748px;width:2px;height:2px;background:#8a8a8a;"></div>
<div class="r" style="left:24px;top:760px;width:2px;height:2px;background:#8a8a8a;"></div>
<div class="r" style="left:24px;top:771px;width:2px;height:2px;background:#8a8a8a;"></div>
<div class="r" style="left:24px;top:788px;width:2px;height:2px;background:#8a8a8a;"></div>
<div class="r" style="left:24px;top:800px;width:2px;height:2px;background:#8a8a8a;"></div>
<div class="r" style="left:24px;top:811px;width:2px;height:2px;background:#8a8a8a;"></div>
<div class="r" style="left:24px;top:823px;width:2px;height:2px;background:#8a8a8a;"></div>
<div class="r" style="left:24px;top:834px;width:2px;height:2px;background:#8a8a8a;"></div>
<div class="r" style="left:24px;top:846px;width:2px;height:2px;background:#8a8a8a;"></div>
<div class="r" style="left:24px;top:857px;width:2px;height:2px;background:#8a8a8a;"></div>
<div class="r" style="left:24px;top:869px;width:2px;height:2px;background:#8a8a8a;"></div>
<div class="r" style="left:24px;top:880px;width:2px;height:2px;background:#8a8a8a;"></div>
<div class="r" style="left:24px;top:897px;width:2px;height:2px;background:#8a8a8a;"></div>
<div class="r" style="left:24px;top:909px;width:2px;height:2px;background:#8a8a8a;"></div>
<div class="r" style="left:24px;top:920px;width:2px;height:2px;background:#8a8a8a;"></div>
<div class="r" style="left:24px;top:937px;width:2px;height:2px;background:#8a8a8a;"></div>
<div class="r" style="left:24px;top:954px;width:2px;height:2px;background:#8a8a8a;"></div>
<div class="r" style="left:24px;top:971px;width:2px;height:2px;background:#8a8a8a;"></div>
<div class="r" style="left:24px;top:988px;width:2px;height:2px;background:#8a8a8a;"></div>
<div class="r" style="left:24px;top:1005px;width:2px;height:2px;background:#8a8a8a;"></div>
<div class="r" style="left:2px;top:362px;width:15px;height:15px;border:1px solid #8c8c8c;background:#eaeaea;"></div>
<div class="r" style="left:7px;top:370px;width:8px;height:2px;background:#555555;"></div>
<div class="r" style="left:7px;top:379px;width:2px;height:308px;background:#8c8c8c;"></div>
<div class="r" style="left:7px;top:685px;width:6px;height:2px;background:#8c8c8c;"></div>
<div class="r" style="left:2px;top:706px;width:15px;height:15px;border:1px solid #8c8c8c;background:#eaeaea;"></div>
<div class="r" style="left:7px;top:714px;width:8px;height:2px;background:#555555;"></div>
<div class="r" style="left:7px;top:723px;width:2px;height:300px;background:#8c8c8c;"></div>
<div class="r" style="left:65px;top:156px;width:1829px;height:867px;background:#fff;overflow:hidden;">
<div class="r" style="left:0px;top:0px;width:1829px;height:115px;background:#2e74a0;"></div>
<div class="r" style="left:797px;top:43px;width:89px;height:18px;background:#93d3cc;"></div>
<div class="r" style="left:797px;top:61px;width:89px;height:18px;background:#e8e2dc;"></div>
<div class="r" style="left:886px;top:43px;width:89px;height:18px;background:#93d3cc;"></div>
<div class="r" style="left:886px;top:61px;width:89px;height:18px;background:#e8e2dc;"></div>
<div class="r" style="left:975px;top:43px;width:89px;height:18px;background:#93d3cc;"></div>
<div class="r" style="left:975px;top:61px;width:89px;height:18px;background:#e8e2dc;"></div>
<div class="r" style="left:1064px;top:43px;width:89px;height:18px;background:#93d3cc;"></div>
<div class="r" style="left:1064px;top:61px;width:89px;height:18px;background:#e8e2dc;"></div>
<div class="r" style="left:1153px;top:43px;width:89px;height:18px;background:#45b5bd;"></div>
<div class="r" style="left:1153px;top:61px;width:89px;height:18px;background:#4bd1e3;"></div>
<div class="r" style="left:1242px;top:43px;width:89px;height:18px;background:#45b5bd;"></div>
<div class="r" style="left:1242px;top:61px;width:89px;height:18px;background:#4bd1e3;"></div>
<div class="r" style="left:1331px;top:43px;width:89px;height:18px;background:#45b5bd;"></div>
<div class="r" style="left:1331px;top:61px;width:89px;height:18px;background:#4bd1e3;"></div>
<div class="r" style="left:1420px;top:43px;width:89px;height:18px;background:#45b5bd;"></div>
<div class="r" style="left:1420px;top:61px;width:89px;height:18px;background:#4bd1e3;"></div>
<div class="r" style="left:1509px;top:43px;width:89px;height:18px;background:#44abc9;"></div>
<div class="r" style="left:1509px;top:61px;width:89px;height:18px;background:#4bd1e3;"></div>
<div class="r" style="left:1598px;top:43px;width:89px;height:18px;background:#44abc9;"></div>
<div class="r" style="left:1598px;top:61px;width:89px;height:18px;background:#4bd1e3;"></div>
<div class="r" style="left:1687px;top:43px;width:89px;height:18px;background:#44abc9;"></div>
<div class="r" style="left:1687px;top:61px;width:89px;height:18px;background:#4bd1e3;"></div>
<div class="r" style="left:1776px;top:43px;width:89px;height:18px;background:#44abc9;"></div>
<div class="r" style="left:1776px;top:61px;width:89px;height:18px;background:#4bd1e3;"></div>
<div class="r" style="left:0px;top:133px;width:1829px;height:18px;background:#2e74a0;"></div>
<div class="r" style="left:796px;top:0px;width:1px;height:867px;background:#a6a6a6;"></div>
<div class="r" style="left:0px;top:115px;width:1829px;height:1px;background:#a6a6a6;"></div>
<div class="t" style="left:8.0px;top:5px;font-size:17px;color:#ffffff;font-weight:bold;transform:scaleX(0.9422);transform-origin:0 0;">Costs</div>
<div class="t" style="left:45.0px;top:25px;font-size:11.8px;color:#ffffff;transform:scaleX(1.0551);transform-origin:0 0;">Model period ending</div>
<div class="t" style="left:45.0px;top:43px;font-size:11.8px;color:#ffffff;transform:scaleX(1.0551);transform-origin:0 0;">Project phase label</div>
<div class="t" style="left:45.0px;top:61px;font-size:11.8px;color:#ffffff;transform:scaleX(1.0551);transform-origin:0 0;">Model timeline label</div>
<div class="t" style="left:45.0px;top:79px;font-size:11.3px;color:#ffffff;font-weight:bold;transform:scaleX(0.9900);transform-origin:0 0;">Financial year ending</div>
<div class="t" style="left:45.0px;top:97px;font-size:11.3px;color:#ffffff;font-weight:bold;transform:scaleX(0.9900);transform-origin:0 0;">Model Label</div>
<div class="r" style="left:420px;top:25px;width:90px;height:53px;border:1px dotted #ffffff;"></div>
<div class="r" style="left:421px;top:43px;width:90px;height:1px;background:transparent;border-top:1px dotted #fff;height:0;"></div>
<div class="r" style="left:421px;top:61px;width:90px;height:1px;background:transparent;border-top:1px dotted #fff;height:0;"></div>
<div class="t" style="left:497.0px;top:24px;font-size:11.8px;color:#ffffff;transform:scaleX(1.0254);transform-origin:0 0;">-</div>
<div class="t" style="left:497.0px;top:42px;font-size:11.8px;color:#ffffff;transform:scaleX(1.0254);transform-origin:0 0;">-</div>
<div class="t" style="left:497.0px;top:60px;font-size:11.8px;color:#ffffff;transform:scaleX(1.0254);transform-origin:0 0;">-</div>
<div class="t" style="left:517.5px;top:25px;font-size:11.8px;color:#ffffff;font-style:italic;transform:scaleX(0.9534);transform-origin:0 0;">No Errors</div>
<div class="t" style="left:517.5px;top:43px;font-size:11.8px;color:#ffffff;font-style:italic;transform:scaleX(0.9534);transform-origin:0 0;">No Alerts</div>
<div class="t" style="left:517.5px;top:61px;font-size:11.8px;color:#ffffff;font-style:italic;transform:scaleX(0.9534);transform-origin:0 0;">No Changes</div>
<div class="t" style="left:653.1px;top:79px;font-size:11.3px;color:#ffffff;font-weight:bold;transform:scaleX(1.0708);transform-origin:0 0;">2020</div>
<div class="t" style="left:757.6px;top:79px;font-size:11.3px;color:#ffffff;font-weight:bold;transform:scaleX(1.0708);transform-origin:0 0;">&lt;&gt;</div>
<div class="t" style="left:457.3px;top:97px;font-size:11.3px;color:#ffffff;font-weight:bold;transform:scaleX(0.9900);transform-origin:0 0;">Constant</div>
<div class="t" style="left:517.5px;top:97px;font-size:11.3px;color:#ffffff;font-weight:bold;transform:scaleX(0.9900);transform-origin:0 0;">Unit</div>
<div class="t" style="left:637.7px;top:97px;font-size:11.3px;color:#ffffff;font-weight:bold;transform:scaleX(0.9900);transform-origin:0 0;">FY Total</div>
<div class="t" style="left:728.7px;top:97px;font-size:11.3px;color:#ffffff;font-weight:bold;transform:scaleX(0.9900);transform-origin:0 0;">FY Total</div>
<div class="t" style="left:824.1px;top:25px;font-size:11.3px;color:#ffffff;font-weight:bold;transform:scaleX(1.0664);transform-origin:0 0;">31 Mar 19</div>
<div class="t" style="left:825.4px;top:43px;font-size:11.3px;color:#000;font-weight:bold;transform:scaleX(0.9900);transform-origin:0 0;">Prior Ops.</div>
<div class="t" style="left:843.4px;top:61px;font-size:11.3px;color:#000;font-weight:bold;transform:scaleX(0.9500);transform-origin:0 0;">Actuals</div>
<div class="t" style="left:851.8px;top:79px;font-size:11.3px;color:#ffffff;font-weight:bold;transform:scaleX(1.0708);transform-origin:0 0;">2019</div>
<div class="t" style="left:872.0px;top:97px;font-size:11.3px;color:#ffffff;font-weight:bold;transform:scaleX(1.0708);transform-origin:0 0;">1</div>
<div class="t" style="left:913.1px;top:25px;font-size:11.3px;color:#ffffff;font-weight:bold;transform:scaleX(1.0664);transform-origin:0 0;">30 Jun 19</div>
<div class="t" style="left:914.4px;top:43px;font-size:11.3px;color:#000;font-weight:bold;transform:scaleX(0.9900);transform-origin:0 0;">Prior Ops.</div>
<div class="t" style="left:932.4px;top:61px;font-size:11.3px;color:#000;font-weight:bold;transform:scaleX(0.9500);transform-origin:0 0;">Actuals</div>
<div class="t" style="left:940.8px;top:79px;font-size:11.3px;color:#ffffff;font-weight:bold;transform:scaleX(1.0708);transform-origin:0 0;">2019</div>
<div class="t" style="left:961.0px;top:97px;font-size:11.3px;color:#ffffff;font-weight:bold;transform:scaleX(1.0708);transform-origin:0 0;">2</div>
<div class="t" style="left:1001.4px;top:25px;font-size:11.3px;color:#ffffff;font-weight:bold;transform:scaleX(1.0664);transform-origin:0 0;">30 Sep 19</div>
<div class="t" style="left:1003.4px;top:43px;font-size:11.3px;color:#000;font-weight:bold;transform:scaleX(0.9900);transform-origin:0 0;">Prior Ops.</div>
<div class="t" style="left:1021.4px;top:61px;font-size:11.3px;color:#000;font-weight:bold;transform:scaleX(0.9500);transform-origin:0 0;">Actuals</div>
<div class="t" style="left:1029.8px;top:79px;font-size:11.3px;color:#ffffff;font-weight:bold;transform:scaleX(1.0708);transform-origin:0 0;">2019</div>
<div class="t" style="left:1050.0px;top:97px;font-size:11.3px;color:#ffffff;font-weight:bold;transform:scaleX(1.0708);transform-origin:0 0;">3</div>
<div class="t" style="left:1090.4px;top:25px;font-size:11.3px;color:#ffffff;font-weight:bold;transform:scaleX(1.0664);transform-origin:0 0;">31 Dec 19</div>
<div class="t" style="left:1092.4px;top:43px;font-size:11.3px;color:#000;font-weight:bold;transform:scaleX(0.9900);transform-origin:0 0;">Prior Ops.</div>
<div class="t" style="left:1110.4px;top:61px;font-size:11.3px;color:#000;font-weight:bold;transform:scaleX(0.9500);transform-origin:0 0;">Actuals</div>
<div class="t" style="left:1118.8px;top:79px;font-size:11.3px;color:#ffffff;font-weight:bold;transform:scaleX(1.0708);transform-origin:0 0;">2019</div>
<div class="t" style="left:1139.0px;top:97px;font-size:11.3px;color:#ffffff;font-weight:bold;transform:scaleX(1.0708);transform-origin:0 0;">4</div>
<div class="t" style="left:1180.1px;top:25px;font-size:11.3px;color:#ffffff;font-weight:bold;transform:scaleX(1.0664);transform-origin:0 0;">31 Mar 20</div>
<div class="t" style="left:1174.6px;top:43px;font-size:11.3px;color:#000;font-weight:bold;transform:scaleX(0.9900);transform-origin:0 0;">New Const.</div>
<div class="t" style="left:1193.5px;top:61px;font-size:11.3px;color:#000;font-weight:bold;transform:scaleX(0.9500);transform-origin:0 0;">Forecast</div>
<div class="t" style="left:1207.8px;top:79px;font-size:11.3px;color:#ffffff;font-weight:bold;transform:scaleX(1.0708);transform-origin:0 0;">2020</div>
<div class="t" style="left:1228.0px;top:97px;font-size:11.3px;color:#ffffff;font-weight:bold;transform:scaleX(1.0708);transform-origin:0 0;">5</div>
<div class="t" style="left:1269.1px;top:25px;font-size:11.3px;color:#ffffff;font-weight:bold;transform:scaleX(1.0664);transform-origin:0 0;">30 Jun 20</div>
<div class="t" style="left:1263.6px;top:43px;font-size:11.3px;color:#000;font-weight:bold;transform:scaleX(0.9900);transform-origin:0 0;">New Const.</div>
<div class="t" style="left:1282.5px;top:61px;font-size:11.3px;color:#000;font-weight:bold;transform:scaleX(0.9500);transform-origin:0 0;">Forecast</div>
<div class="t" style="left:1296.8px;top:79px;font-size:11.3px;color:#ffffff;font-weight:bold;transform:scaleX(1.0708);transform-origin:0 0;">2020</div>
<div class="t" style="left:1317.0px;top:97px;font-size:11.3px;color:#ffffff;font-weight:bold;transform:scaleX(1.0708);transform-origin:0 0;">6</div>
<div class="t" style="left:1357.4px;top:25px;font-size:11.3px;color:#ffffff;font-weight:bold;transform:scaleX(1.0664);transform-origin:0 0;">30 Sep 20</div>
<div class="t" style="left:1352.6px;top:43px;font-size:11.3px;color:#000;font-weight:bold;transform:scaleX(0.9900);transform-origin:0 0;">New Const.</div>
<div class="t" style="left:1371.5px;top:61px;font-size:11.3px;color:#000;font-weight:bold;transform:scaleX(0.9500);transform-origin:0 0;">Forecast</div>
<div class="t" style="left:1385.8px;top:79px;font-size:11.3px;color:#ffffff;font-weight:bold;transform:scaleX(1.0708);transform-origin:0 0;">2020</div>
<div class="t" style="left:1406.0px;top:97px;font-size:11.3px;color:#ffffff;font-weight:bold;transform:scaleX(1.0708);transform-origin:0 0;">7</div>
<div class="t" style="left:1446.4px;top:25px;font-size:11.3px;color:#ffffff;font-weight:bold;transform:scaleX(1.0664);transform-origin:0 0;">31 Dec 20</div>
<div class="t" style="left:1441.6px;top:43px;font-size:11.3px;color:#000;font-weight:bold;transform:scaleX(0.9900);transform-origin:0 0;">New Const.</div>
<div class="t" style="left:1460.5px;top:61px;font-size:11.3px;color:#000;font-weight:bold;transform:scaleX(0.9500);transform-origin:0 0;">Forecast</div>
<div class="t" style="left:1474.8px;top:79px;font-size:11.3px;color:#ffffff;font-weight:bold;transform:scaleX(1.0708);transform-origin:0 0;">2020</div>
<div class="t" style="left:1495.0px;top:97px;font-size:11.3px;color:#ffffff;font-weight:bold;transform:scaleX(1.0708);transform-origin:0 0;">8</div>
<div class="t" style="left:1536.1px;top:25px;font-size:11.3px;color:#ffffff;font-weight:bold;transform:scaleX(1.0664);transform-origin:0 0;">31 Mar 21</div>
<div class="t" style="left:1566.6px;top:43px;font-size:11.3px;color:#000;font-weight:bold;transform:scaleX(0.9900);transform-origin:0 0;">Ops.</div>
<div class="t" style="left:1549.5px;top:61px;font-size:11.3px;color:#000;font-weight:bold;transform:scaleX(0.9500);transform-origin:0 0;">Forecast</div>
<div class="t" style="left:1563.8px;top:79px;font-size:11.3px;color:#ffffff;font-weight:bold;transform:scaleX(1.0708);transform-origin:0 0;">2021</div>
<div class="t" style="left:1584.0px;top:97px;font-size:11.3px;color:#ffffff;font-weight:bold;transform:scaleX(1.0708);transform-origin:0 0;">9</div>
<div class="t" style="left:1625.1px;top:25px;font-size:11.3px;color:#ffffff;font-weight:bold;transform:scaleX(1.0664);transform-origin:0 0;">30 Jun 21</div>
<div class="t" style="left:1655.6px;top:43px;font-size:11.3px;color:#000;font-weight:bold;transform:scaleX(0.9900);transform-origin:0 0;">Ops.</div>
<div class="t" style="left:1638.5px;top:61px;font-size:11.3px;color:#000;font-weight:bold;transform:scaleX(0.9500);transform-origin:0 0;">Forecast</div>
<div class="t" style="left:1652.8px;top:79px;font-size:11.3px;color:#ffffff;font-weight:bold;transform:scaleX(1.0708);transform-origin:0 0;">2021</div>
<div class="t" style="left:1666.2px;top:97px;font-size:11.3px;color:#ffffff;font-weight:bold;transform:scaleX(1.0708);transform-origin:0 0;">10</div>
<div class="t" style="left:1713.4px;top:25px;font-size:11.3px;color:#ffffff;font-weight:bold;transform:scaleX(1.0664);transform-origin:0 0;">30 Sep 21</div>
<div class="t" style="left:1744.6px;top:43px;font-size:11.3px;color:#000;font-weight:bold;transform:scaleX(0.9900);transform-origin:0 0;">Ops.</div>
<div class="t" style="left:1727.5px;top:61px;font-size:11.3px;color:#000;font-weight:bold;transform:scaleX(0.9500);transform-origin:0 0;">Forecast</div>
<div class="t" style="left:1741.8px;top:79px;font-size:11.3px;color:#ffffff;font-weight:bold;transform:scaleX(1.0708);transform-origin:0 0;">2021</div>
<div class="t" style="left:1755.9px;top:97px;font-size:11.3px;color:#ffffff;font-weight:bold;transform:scaleX(1.0708);transform-origin:0 0;">11</div>
<div class="t" style="left:1802.4px;top:25px;font-size:11.3px;color:#ffffff;font-weight:bold;transform:scaleX(1.0664);transform-origin:0 0;">31 Dec 21</div>
<div class="t" style="left:1833.6px;top:43px;font-size:11.3px;color:#000;font-weight:bold;transform:scaleX(0.9900);transform-origin:0 0;">Ops.</div>
<div class="t" style="left:1816.5px;top:61px;font-size:11.3px;color:#000;font-weight:bold;transform:scaleX(0.9500);transform-origin:0 0;">Forecast</div>
<div class="t" style="left:1830.8px;top:79px;font-size:11.3px;color:#ffffff;font-weight:bold;transform:scaleX(1.0708);transform-origin:0 0;">2021</div>
<div class="t" style="left:1844.2px;top:97px;font-size:11.3px;color:#ffffff;font-weight:bold;transform:scaleX(1.0708);transform-origin:0 0;">12</div>
<div class="r" style="left:795px;top:114px;width:92px;height:1px;background:#217346;"></div>
<div class="r" style="left:795px;top:114px;width:1px;height:21px;background:#217346;"></div>
<div class="r" style="left:885px;top:116px;width:2px;height:14px;background:#217346;"></div>
<div class="r" style="left:795px;top:133px;width:87px;height:2px;background:#217346;"></div>
<div class="r" style="left:882px;top:130px;width:6px;height:6px;background:#ffffff;"></div>
<div class="r" style="left:883px;top:131px;width:5px;height:5px;background:#217346;"></div>
<div class="t" style="left:5.8px;top:133px;font-size:11.3px;color:#ffffff;font-weight:bold;transform:scaleX(0.9292);transform-origin:0 0;">1. COSTS</div>
<div class="t" style="left:5.8px;top:169px;font-size:11.3px;color:#000;font-weight:bold;transform:scaleX(0.9292);transform-origin:0 0;">1.1. COSTS - EXISTING TERMINAL [ PL ]</div>
<div class="t" style="left:15.5px;top:205px;font-size:11.3px;color:#000;font-weight:bold;transform:scaleX(0.9900);transform-origin:0 0;">1.1.1. Container direct costs - Existing terminal due</div>
<div class="t" style="left:44.5px;top:223px;font-size:11.8px;color:#0000ff;transform:scaleX(1.0551);transform-origin:0 0;">Container revenue - Existing terminal - Transshipment</div>
<div class="t" style="left:499.0px;top:222px;font-size:11.8px;color:#0000ff;transform:scaleX(1.0254);transform-origin:0 0;">-</div>
<div class="t" style="left:517.0px;top:223px;font-size:11.8px;color:#0000ff;transform:scaleX(0.8983);transform-origin:0 0;">USD k</div>
<div class="t" style="left:649.2px;top:223px;font-size:11.8px;color:#0000ff;transform:scaleX(1.0254);transform-origin:0 0;">4,767</div>
<div class="t" style="left:723.4px;top:223px;font-size:11.8px;color:#0000ff;transform:scaleX(1.0254);transform-origin:0 0;">2,28,623</div>
<div class="t" style="left:784.0px;top:222px;font-size:11.8px;color:#0000ff;transform:scaleX(1.0254);transform-origin:0 0;">-</div>
<div class="t" style="left:873.0px;top:222px;font-size:11.8px;color:#0000ff;transform:scaleX(1.0254);transform-origin:0 0;">-</div>
<div class="t" style="left:962.0px;top:222px;font-size:11.8px;color:#0000ff;transform:scaleX(1.0254);transform-origin:0 0;">-</div>
<div class="t" style="left:1051.0px;top:222px;font-size:11.8px;color:#0000ff;transform:scaleX(1.0254);transform-origin:0 0;">-</div>
<div class="t" style="left:1140.0px;top:222px;font-size:11.8px;color:#0000ff;transform:scaleX(1.0254);transform-origin:0 0;">-</div>
<div class="t" style="left:1204.2px;top:223px;font-size:11.8px;color:#0000ff;transform:scaleX(1.0254);transform-origin:0 0;">1,186</div>
<div class="t" style="left:1293.2px;top:223px;font-size:11.8px;color:#0000ff;transform:scaleX(1.0254);transform-origin:0 0;">1,186</div>
<div class="t" style="left:1382.2px;top:223px;font-size:11.8px;color:#0000ff;transform:scaleX(1.0254);transform-origin:0 0;">1,198</div>
<div class="t" style="left:1471.2px;top:223px;font-size:11.8px;color:#0000ff;transform:scaleX(1.0254);transform-origin:0 0;">1,198</div>
<div class="t" style="left:1560.2px;top:223px;font-size:11.8px;color:#0000ff;transform:scaleX(1.0254);transform-origin:0 0;">1,234</div>
<div class="t" style="left:1649.2px;top:223px;font-size:11.8px;color:#0000ff;transform:scaleX(1.0254);transform-origin:0 0;">1,234</div>
<div class="t" style="left:1738.2px;top:223px;font-size:11.8px;color:#0000ff;transform:scaleX(1.0254);transform-origin:0 0;">1,234</div>
<div class="t" style="left:1827.2px;top:223px;font-size:11.8px;color:#0000ff;transform:scaleX(1.0254);transform-origin:0 0;">1,234</div>
<div class="t" style="left:44.5px;top:240px;font-size:11.8px;color:#0000ff;transform:scaleX(1.0551);transform-origin:0 0;">Container revenue - Existing terminal - Domestic</div>
<div class="t" style="left:499.0px;top:239px;font-size:11.8px;color:#0000ff;transform:scaleX(1.0254);transform-origin:0 0;">-</div>
<div class="t" style="left:517.0px;top:240px;font-size:11.8px;color:#0000ff;transform:scaleX(0.8983);transform-origin:0 0;">USD k</div>
<div class="t" style="left:642.5px;top:240px;font-size:11.8px;color:#0000ff;transform:scaleX(1.0254);transform-origin:0 0;">17,478</div>
<div class="t" style="left:723.4px;top:240px;font-size:11.8px;color:#0000ff;transform:scaleX(1.0254);transform-origin:0 0;">8,38,284</div>
<div class="t" style="left:784.0px;top:239px;font-size:11.8px;color:#0000ff;transform:scaleX(1.0254);transform-origin:0 0;">-</div>
<div class="t" style="left:873.0px;top:239px;font-size:11.8px;color:#0000ff;transform:scaleX(1.0254);transform-origin:0 0;">-</div>
<div class="t" style="left:962.0px;top:239px;font-size:11.8px;color:#0000ff;transform:scaleX(1.0254);transform-origin:0 0;">-</div>
<div class="t" style="left:1051.0px;top:239px;font-size:11.8px;color:#0000ff;transform:scaleX(1.0254);transform-origin:0 0;">-</div>
<div class="t" style="left:1140.0px;top:239px;font-size:11.8px;color:#0000ff;transform:scaleX(1.0254);transform-origin:0 0;">-</div>
<div class="t" style="left:1204.2px;top:240px;font-size:11.8px;color:#0000ff;transform:scaleX(1.0254);transform-origin:0 0;">4,348</div>
<div class="t" style="left:1293.2px;top:240px;font-size:11.8px;color:#0000ff;transform:scaleX(1.0254);transform-origin:0 0;">4,348</div>
<div class="t" style="left:1382.2px;top:240px;font-size:11.8px;color:#0000ff;transform:scaleX(1.0254);transform-origin:0 0;">4,391</div>
<div class="t" style="left:1471.2px;top:240px;font-size:11.8px;color:#0000ff;transform:scaleX(1.0254);transform-origin:0 0;">4,391</div>
<div class="t" style="left:1560.2px;top:240px;font-size:11.8px;color:#0000ff;transform:scaleX(1.0254);transform-origin:0 0;">4,524</div>
<div class="t" style="left:1649.2px;top:240px;font-size:11.8px;color:#0000ff;transform:scaleX(1.0254);transform-origin:0 0;">4,524</div>
<div class="t" style="left:1738.2px;top:240px;font-size:11.8px;color:#0000ff;transform:scaleX(1.0254);transform-origin:0 0;">4,524</div>
<div class="t" style="left:1827.2px;top:240px;font-size:11.8px;color:#0000ff;transform:scaleX(1.0254);transform-origin:0 0;">4,524</div>
<div class="r" style="left:44.5px;top:263px;width:375.5px;height:20px;overflow:hidden;"><div class="t" style="left:0;top:0;font-size:11.8px;color:#0000ff;transform:scaleX(1.0551);transform-origin:0 0;">Container direct costs - Existing terminal as % of Revenue - Transshipment</div></div>
<div class="t" style="left:499.0px;top:262px;font-size:11.8px;color:#0000ff;transform:scaleX(1.0254);transform-origin:0 0;">-</div>
<div class="t" style="left:517.0px;top:263px;font-size:11.8px;color:#0000ff;transform:scaleX(1.0551);transform-origin:0 0;">%</div>
<div class="t" style="left:674.0px;top:262px;font-size:11.8px;color:#0000ff;transform:scaleX(1.0254);transform-origin:0 0;">-</div>
<div class="t" style="left:765.0px;top:262px;font-size:11.8px;color:#0000ff;transform:scaleX(1.0254);transform-origin:0 0;">-</div>
<div class="t" style="left:784.0px;top:262px;font-size:11.8px;color:#0000ff;transform:scaleX(1.0254);transform-origin:0 0;">-</div>
<div class="t" style="left:873.0px;top:262px;font-size:11.8px;color:#0000ff;transform:scaleX(1.0254);transform-origin:0 0;">-</div>
<div class="t" style="left:962.0px;top:262px;font-size:11.8px;color:#0000ff;transform:scaleX(1.0254);transform-origin:0 0;">-</div>
<div class="t" style="left:1051.0px;top:262px;font-size:11.8px;color:#0000ff;transform:scaleX(1.0254);transform-origin:0 0;">-</div>
<div class="t" style="left:1140.0px;top:262px;font-size:11.8px;color:#0000ff;transform:scaleX(1.0254);transform-origin:0 0;">-</div>
<div class="t" style="left:1195.2px;top:263px;font-size:11.8px;color:#0000ff;transform:scaleX(0.9831);transform-origin:0 0;">59.00%</div>
<div class="t" style="left:1284.2px;top:263px;font-size:11.8px;color:#0000ff;transform:scaleX(0.9831);transform-origin:0 0;">59.00%</div>
<div class="t" style="left:1373.2px;top:263px;font-size:11.8px;color:#0000ff;transform:scaleX(0.9831);transform-origin:0 0;">59.00%</div>
<div class="t" style="left:1462.2px;top:263px;font-size:11.8px;color:#0000ff;transform:scaleX(0.9831);transform-origin:0 0;">59.00%</div>
<div class="t" style="left:1551.2px;top:263px;font-size:11.8px;color:#0000ff;transform:scaleX(0.9831);transform-origin:0 0;">59.00%</div>
<div class="t" style="left:1640.2px;top:263px;font-size:11.8px;color:#0000ff;transform:scaleX(0.9831);transform-origin:0 0;">59.00%</div>
<div class="t" style="left:1729.2px;top:263px;font-size:11.8px;color:#0000ff;transform:scaleX(0.9831);transform-origin:0 0;">59.00%</div>
<div class="t" style="left:1818.2px;top:263px;font-size:11.8px;color:#0000ff;transform:scaleX(0.9831);transform-origin:0 0;">59.00%</div>
<div class="r" style="left:44.5px;top:280px;width:375.5px;height:20px;overflow:hidden;"><div class="t" style="left:0;top:0;font-size:11.8px;color:#0000ff;transform:scaleX(1.0551);transform-origin:0 0;">Container direct costs - Existing terminal as % of Revenue - Domestic</div></div>
<div class="t" style="left:499.0px;top:279px;font-size:11.8px;color:#0000ff;transform:scaleX(1.0254);transform-origin:0 0;">-</div>
<div class="t" style="left:517.0px;top:280px;font-size:11.8px;color:#0000ff;transform:scaleX(1.0551);transform-origin:0 0;">%</div>
<div class="t" style="left:674.0px;top:279px;font-size:11.8px;color:#0000ff;transform:scaleX(1.0254);transform-origin:0 0;">-</div>
<div class="t" style="left:765.0px;top:279px;font-size:11.8px;color:#0000ff;transform:scaleX(1.0254);transform-origin:0 0;">-</div>
<div class="t" style="left:784.0px;top:279px;font-size:11.8px;color:#0000ff;transform:scaleX(1.0254);transform-origin:0 0;">-</div>
<div class="t" style="left:873.0px;top:279px;font-size:11.8px;color:#0000ff;transform:scaleX(1.0254);transform-origin:0 0;">-</div>
<div class="t" style="left:962.0px;top:279px;font-size:11.8px;color:#0000ff;transform:scaleX(1.0254);transform-origin:0 0;">-</div>
<div class="t" style="left:1051.0px;top:279px;font-size:11.8px;color:#0000ff;transform:scaleX(1.0254);transform-origin:0 0;">-</div>
<div class="t" style="left:1140.0px;top:279px;font-size:11.8px;color:#0000ff;transform:scaleX(1.0254);transform-origin:0 0;">-</div>
<div class="t" style="left:1195.2px;top:280px;font-size:11.8px;color:#0000ff;transform:scaleX(0.9831);transform-origin:0 0;">56.00%</div>
<div class="t" style="left:1284.2px;top:280px;font-size:11.8px;color:#0000ff;transform:scaleX(0.9831);transform-origin:0 0;">56.00%</div>
<div class="t" style="left:1373.2px;top:280px;font-size:11.8px;color:#0000ff;transform:scaleX(0.9831);transform-origin:0 0;">56.00%</div>
<div class="t" style="left:1462.2px;top:280px;font-size:11.8px;color:#0000ff;transform:scaleX(0.9831);transform-origin:0 0;">56.00%</div>
<div class="t" style="left:1551.2px;top:280px;font-size:11.8px;color:#0000ff;transform:scaleX(0.9831);transform-origin:0 0;">56.00%</div>
<div class="t" style="left:1640.2px;top:280px;font-size:11.8px;color:#0000ff;transform:scaleX(0.9831);transform-origin:0 0;">56.00%</div>
<div class="t" style="left:1729.2px;top:280px;font-size:11.8px;color:#0000ff;transform:scaleX(0.9831);transform-origin:0 0;">56.00%</div>
<div class="t" style="left:1818.2px;top:280px;font-size:11.8px;color:#0000ff;transform:scaleX(0.9831);transform-origin:0 0;">56.00%</div>
<div class="t" style="left:44.5px;top:303px;font-size:11.8px;color:#0000ff;transform:scaleX(1.0551);transform-origin:0 0;">Phase flag - [p11]</div>
<div class="t" style="left:499.0px;top:302px;font-size:11.8px;color:#0000ff;transform:scaleX(1.0254);transform-origin:0 0;">-</div>
<div class="t" style="left:517.0px;top:303px;font-size:11.8px;color:#0000ff;transform:scaleX(1.1000);transform-origin:0 0;">flag</div>
<div class="t" style="left:672.8px;top:303px;font-size:11.8px;color:#0000ff;transform:scaleX(1.0254);transform-origin:0 0;">4</div>
<div class="t" style="left:750.3px;top:303px;font-size:11.8px;color:#0000ff;transform:scaleX(1.0254);transform-origin:0 0;">124</div>
<div class="t" style="left:784.0px;top:302px;font-size:11.8px;color:#0000ff;transform:scaleX(1.0254);transform-origin:0 0;">-</div>
<div class="t" style="left:871.8px;top:303px;font-size:11.8px;color:#0000ff;transform:scaleX(1.0254);transform-origin:0 0;">1</div>
<div class="t" style="left:960.8px;top:303px;font-size:11.8px;color:#0000ff;transform:scaleX(1.0254);transform-origin:0 0;">1</div>
<div class="t" style="left:1049.8px;top:303px;font-size:11.8px;color:#0000ff;transform:scaleX(1.0254);transform-origin:0 0;">1</div>
<div class="t" style="left:1138.8px;top:303px;font-size:11.8px;color:#0000ff;transform:scaleX(1.0254);transform-origin:0 0;">1</div>
<div class="t" style="left:1227.8px;top:303px;font-size:11.8px;color:#0000ff;transform:scaleX(1.0254);transform-origin:0 0;">1</div>
<div class="t" style="left:1316.8px;top:303px;font-size:11.8px;color:#0000ff;transform:scaleX(1.0254);transform-origin:0 0;">1</div>
<div class="t" style="left:1405.8px;top:303px;font-size:11.8px;color:#0000ff;transform:scaleX(1.0254);transform-origin:0 0;">1</div>
<div class="t" style="left:1494.8px;top:303px;font-size:11.8px;color:#0000ff;transform:scaleX(1.0254);transform-origin:0 0;">1</div>
<div class="t" style="left:1583.8px;top:303px;font-size:11.8px;color:#0000ff;transform:scaleX(1.0254);transform-origin:0 0;">1</div>
<div class="t" style="left:1672.8px;top:303px;font-size:11.8px;color:#0000ff;transform:scaleX(1.0254);transform-origin:0 0;">1</div>
<div class="t" style="left:1761.8px;top:303px;font-size:11.8px;color:#0000ff;transform:scaleX(1.0254);transform-origin:0 0;">1</div>
<div class="t" style="left:1850.8px;top:303px;font-size:11.8px;color:#0000ff;transform:scaleX(1.0254);transform-origin:0 0;">1</div>
<div class="t" style="left:44.5px;top:326px;font-size:11.8px;color:#0000ff;transform:scaleX(1.0551);transform-origin:0 0;">Forecast period flag</div>
<div class="t" style="left:499.0px;top:325px;font-size:11.8px;color:#0000ff;transform:scaleX(1.0254);transform-origin:0 0;">-</div>
<div class="t" style="left:517.0px;top:326px;font-size:11.8px;color:#0000ff;transform:scaleX(1.1000);transform-origin:0 0;">flag</div>
<div class="t" style="left:672.8px;top:326px;font-size:11.8px;color:#0000ff;transform:scaleX(1.0254);transform-origin:0 0;">4</div>
<div class="t" style="left:750.3px;top:326px;font-size:11.8px;color:#0000ff;transform:scaleX(1.0254);transform-origin:0 0;">120</div>
<div class="t" style="left:784.0px;top:325px;font-size:11.8px;color:#0000ff;transform:scaleX(1.0254);transform-origin:0 0;">-</div>
<div class="t" style="left:873.0px;top:325px;font-size:11.8px;color:#0000ff;transform:scaleX(1.0254);transform-origin:0 0;">-</div>
<div class="t" style="left:962.0px;top:325px;font-size:11.8px;color:#0000ff;transform:scaleX(1.0254);transform-origin:0 0;">-</div>
<div class="t" style="left:1051.0px;top:325px;font-size:11.8px;color:#0000ff;transform:scaleX(1.0254);transform-origin:0 0;">-</div>
<div class="t" style="left:1140.0px;top:325px;font-size:11.8px;color:#0000ff;transform:scaleX(1.0254);transform-origin:0 0;">-</div>
<div class="t" style="left:1227.8px;top:326px;font-size:11.8px;color:#0000ff;transform:scaleX(1.0254);transform-origin:0 0;">1</div>
<div class="t" style="left:1316.8px;top:326px;font-size:11.8px;color:#0000ff;transform:scaleX(1.0254);transform-origin:0 0;">1</div>
<div class="t" style="left:1405.8px;top:326px;font-size:11.8px;color:#0000ff;transform:scaleX(1.0254);transform-origin:0 0;">1</div>
<div class="t" style="left:1494.8px;top:326px;font-size:11.8px;color:#0000ff;transform:scaleX(1.0254);transform-origin:0 0;">1</div>
<div class="t" style="left:1583.8px;top:326px;font-size:11.8px;color:#0000ff;transform:scaleX(1.0254);transform-origin:0 0;">1</div>
<div class="t" style="left:1672.8px;top:326px;font-size:11.8px;color:#0000ff;transform:scaleX(1.0254);transform-origin:0 0;">1</div>
<div class="t" style="left:1761.8px;top:326px;font-size:11.8px;color:#0000ff;transform:scaleX(1.0254);transform-origin:0 0;">1</div>
<div class="t" style="left:1850.8px;top:326px;font-size:11.8px;color:#0000ff;transform:scaleX(1.0254);transform-origin:0 0;">1</div>
<div class="t" style="left:44.5px;top:349px;font-size:11.8px;color:#0000ff;transform:scaleX(1.0551);transform-origin:0 0;">Sensitivity factor - Costs</div>
<div class="t" style="left:499.0px;top:348px;font-size:11.8px;color:#0000ff;transform:scaleX(1.0254);transform-origin:0 0;">-</div>
<div class="t" style="left:517.0px;top:349px;font-size:11.8px;color:#0000ff;transform:scaleX(1.1000);transform-origin:0 0;">factor</div>
<div class="t" style="left:674.0px;top:348px;font-size:11.8px;color:#0000ff;transform:scaleX(1.0254);transform-origin:0 0;">-</div>
<div class="t" style="left:765.0px;top:348px;font-size:11.8px;color:#0000ff;transform:scaleX(1.0254);transform-origin:0 0;">-</div>
<div class="t" style="left:784.0px;top:348px;font-size:11.8px;color:#0000ff;transform:scaleX(1.0254);transform-origin:0 0;">-</div>
<div class="t" style="left:841.5px;top:349px;font-size:11.8px;color:#0000ff;transform:scaleX(1.0254);transform-origin:0 0;">1.0000</div>
<div class="t" style="left:930.5px;top:349px;font-size:11.8px;color:#0000ff;transform:scaleX(1.0254);transform-origin:0 0;">1.0000</div>
<div class="t" style="left:1019.5px;top:349px;font-size:11.8px;color:#0000ff;transform:scaleX(1.0254);transform-origin:0 0;">1.0000</div>
<div class="t" style="left:1108.5px;top:349px;font-size:11.8px;color:#0000ff;transform:scaleX(1.0254);transform-origin:0 0;">1.0000</div>
<div class="t" style="left:1197.5px;top:349px;font-size:11.8px;color:#0000ff;transform:scaleX(1.0254);transform-origin:0 0;">1.0000</div>
<div class="t" style="left:1286.5px;top:349px;font-size:11.8px;color:#0000ff;transform:scaleX(1.0254);transform-origin:0 0;">1.0000</div>
<div class="t" style="left:1375.5px;top:349px;font-size:11.8px;color:#0000ff;transform:scaleX(1.0254);transform-origin:0 0;">1.0000</div>
<div class="t" style="left:1464.5px;top:349px;font-size:11.8px;color:#0000ff;transform:scaleX(1.0254);transform-origin:0 0;">1.0000</div>
<div class="t" style="left:1553.5px;top:349px;font-size:11.8px;color:#0000ff;transform:scaleX(1.0254);transform-origin:0 0;">1.0000</div>
<div class="t" style="left:1642.5px;top:349px;font-size:11.8px;color:#0000ff;transform:scaleX(1.0254);transform-origin:0 0;">1.0000</div>
<div class="t" style="left:1731.5px;top:349px;font-size:11.8px;color:#0000ff;transform:scaleX(1.0254);transform-origin:0 0;">1.0000</div>
<div class="t" style="left:1820.5px;top:349px;font-size:11.8px;color:#0000ff;transform:scaleX(1.0254);transform-origin:0 0;">1.0000</div>
<div class="t" style="left:44.5px;top:372px;font-size:11.8px;color:#000000;transform:scaleX(1.0551);transform-origin:0 0;">Container direct costs - Existing terminal - Transshipment</div>
<div class="t" style="left:517.0px;top:372px;font-size:11.8px;color:#000000;transform:scaleX(0.8983);transform-origin:0 0;">USD k</div>
<div class="t" style="left:649.2px;top:372px;font-size:11.8px;color:#000000;transform:scaleX(1.0254);transform-origin:0 0;">2,812</div>
<div class="t" style="left:723.4px;top:372px;font-size:11.8px;color:#000000;transform:scaleX(1.0254);transform-origin:0 0;">1,34,887</div>
<div class="t" style="left:873.0px;top:371px;font-size:11.8px;color:#000000;transform:scaleX(1.0254);transform-origin:0 0;">-</div>
<div class="t" style="left:962.0px;top:371px;font-size:11.8px;color:#000000;transform:scaleX(1.0254);transform-origin:0 0;">-</div>
<div class="t" style="left:1051.0px;top:371px;font-size:11.8px;color:#000000;transform:scaleX(1.0254);transform-origin:0 0;">-</div>
<div class="t" style="left:1140.0px;top:371px;font-size:11.8px;color:#000000;transform:scaleX(1.0254);transform-origin:0 0;">-</div>
<div class="t" style="left:1214.3px;top:372px;font-size:11.8px;color:#000000;transform:scaleX(1.0254);transform-origin:0 0;">700</div>
<div class="t" style="left:1303.3px;top:372px;font-size:11.8px;color:#000000;transform:scaleX(1.0254);transform-origin:0 0;">700</div>
<div class="t" style="left:1392.3px;top:372px;font-size:11.8px;color:#000000;transform:scaleX(1.0254);transform-origin:0 0;">707</div>
<div class="t" style="left:1481.3px;top:372px;font-size:11.8px;color:#000000;transform:scaleX(1.0254);transform-origin:0 0;">707</div>
<div class="t" style="left:1570.3px;top:372px;font-size:11.8px;color:#000000;transform:scaleX(1.0254);transform-origin:0 0;">728</div>
<div class="t" style="left:1659.3px;top:372px;font-size:11.8px;color:#000000;transform:scaleX(1.0254);transform-origin:0 0;">728</div>
<div class="t" style="left:1748.3px;top:372px;font-size:11.8px;color:#000000;transform:scaleX(1.0254);transform-origin:0 0;">728</div>
<div class="t" style="left:1837.3px;top:372px;font-size:11.8px;color:#000000;transform:scaleX(1.0254);transform-origin:0 0;">728</div>
<div class="t" style="left:44.5px;top:389px;font-size:11.8px;color:#000000;transform:scaleX(1.0551);transform-origin:0 0;">Container direct costs - Existing terminal - Domestic</div>
<div class="t" style="left:517.0px;top:389px;font-size:11.8px;color:#000000;transform:scaleX(0.8983);transform-origin:0 0;">USD k</div>
<div class="t" style="left:649.2px;top:389px;font-size:11.8px;color:#000000;transform:scaleX(1.0254);transform-origin:0 0;">9,788</div>
<div class="t" style="left:723.4px;top:389px;font-size:11.8px;color:#000000;transform:scaleX(1.0254);transform-origin:0 0;">4,69,439</div>
<div class="t" style="left:873.0px;top:388px;font-size:11.8px;color:#000000;transform:scaleX(1.0254);transform-origin:0 0;">-</div>
<div class="t" style="left:962.0px;top:388px;font-size:11.8px;color:#000000;transform:scaleX(1.0254);transform-origin:0 0;">-</div>
<div class="t" style="left:1051.0px;top:388px;font-size:11.8px;color:#000000;transform:scaleX(1.0254);transform-origin:0 0;">-</div>
<div class="t" style="left:1140.0px;top:388px;font-size:11.8px;color:#000000;transform:scaleX(1.0254);transform-origin:0 0;">-</div>
<div class="t" style="left:1204.2px;top:389px;font-size:11.8px;color:#000000;transform:scaleX(1.0254);transform-origin:0 0;">2,435</div>
<div class="t" style="left:1293.2px;top:389px;font-size:11.8px;color:#000000;transform:scaleX(1.0254);transform-origin:0 0;">2,435</div>
<div class="t" style="left:1382.2px;top:389px;font-size:11.8px;color:#000000;transform:scaleX(1.0254);transform-origin:0 0;">2,459</div>
<div class="t" style="left:1471.2px;top:389px;font-size:11.8px;color:#000000;transform:scaleX(1.0254);transform-origin:0 0;">2,459</div>
<div class="t" style="left:1560.2px;top:389px;font-size:11.8px;color:#000000;transform:scaleX(1.0254);transform-origin:0 0;">2,533</div>
<div class="t" style="left:1649.2px;top:389px;font-size:11.8px;color:#000000;transform:scaleX(1.0254);transform-origin:0 0;">2,533</div>
<div class="t" style="left:1738.2px;top:389px;font-size:11.8px;color:#000000;transform:scaleX(1.0254);transform-origin:0 0;">2,533</div>
<div class="t" style="left:1827.2px;top:389px;font-size:11.8px;color:#000000;transform:scaleX(1.0254);transform-origin:0 0;">2,533</div>
<div class="r" style="left:39px;top:412px;width:1790px;height:1px;background:#8c8c8c;"></div>
<div class="r" style="left:39px;top:429px;width:1790px;height:1px;background:#8c8c8c;"></div>
<div class="t" style="left:44.5px;top:412px;font-size:11.8px;color:#000000;transform:scaleX(1.0551);transform-origin:0 0;">Container direct costs - Existing terminal due [F]</div>
<div class="t" style="left:517.0px;top:412px;font-size:11.8px;color:#000000;transform:scaleX(0.8983);transform-origin:0 0;">USD k</div>
<div class="t" style="left:642.5px;top:412px;font-size:11.8px;color:#000000;transform:scaleX(1.0254);transform-origin:0 0;">12,600</div>
<div class="t" style="left:723.4px;top:412px;font-size:11.8px;color:#000000;transform:scaleX(1.0254);transform-origin:0 0;">6,04,326</div>
<div class="t" style="left:873.0px;top:411px;font-size:11.8px;color:#000000;transform:scaleX(1.0254);transform-origin:0 0;">-</div>
<div class="t" style="left:962.0px;top:411px;font-size:11.8px;color:#000000;transform:scaleX(1.0254);transform-origin:0 0;">-</div>
<div class="t" style="left:1051.0px;top:411px;font-size:11.8px;color:#000000;transform:scaleX(1.0254);transform-origin:0 0;">-</div>
<div class="t" style="left:1140.0px;top:411px;font-size:11.8px;color:#000000;transform:scaleX(1.0254);transform-origin:0 0;">-</div>
<div class="t" style="left:1204.2px;top:412px;font-size:11.8px;color:#000000;transform:scaleX(1.0254);transform-origin:0 0;">3,134</div>
<div class="t" style="left:1293.2px;top:412px;font-size:11.8px;color:#000000;transform:scaleX(1.0254);transform-origin:0 0;">3,134</div>
<div class="t" style="left:1382.2px;top:412px;font-size:11.8px;color:#000000;transform:scaleX(1.0254);transform-origin:0 0;">3,166</div>
<div class="t" style="left:1471.2px;top:412px;font-size:11.8px;color:#000000;transform:scaleX(1.0254);transform-origin:0 0;">3,166</div>
<div class="t" style="left:1560.2px;top:412px;font-size:11.8px;color:#000000;transform:scaleX(1.0254);transform-origin:0 0;">3,261</div>
<div class="t" style="left:1649.2px;top:412px;font-size:11.8px;color:#000000;transform:scaleX(1.0254);transform-origin:0 0;">3,261</div>
<div class="t" style="left:1738.2px;top:412px;font-size:11.8px;color:#000000;transform:scaleX(1.0254);transform-origin:0 0;">3,261</div>
<div class="t" style="left:1827.2px;top:412px;font-size:11.8px;color:#000000;transform:scaleX(1.0254);transform-origin:0 0;">3,261</div>
<div class="t" style="left:25.0px;top:446px;font-size:11.8px;color:#000;transform:scaleX(0.9500);transform-origin:0 0;">A&amp;F</div>
<div class="r" style="left:22px;top:461px;width:28px;height:1px;background:#000;"></div>
<div class="t" style="left:44.5px;top:463px;font-size:11.8px;color:#0000ff;transform:scaleX(1.0551);transform-origin:0 0;">Container direct costs - Existing terminal due [A]</div>
<div class="t" style="left:499.0px;top:462px;font-size:11.8px;color:#0000ff;transform:scaleX(1.0254);transform-origin:0 0;">-</div>
<div class="t" style="left:517.0px;top:463px;font-size:11.8px;color:#0000ff;transform:scaleX(0.8983);transform-origin:0 0;">USD k</div>
<div class="t" style="left:674.0px;top:462px;font-size:11.8px;color:#0000ff;transform:scaleX(1.0254);transform-origin:0 0;">-</div>
<div class="t" style="left:736.2px;top:463px;font-size:11.8px;color:#0000ff;transform:scaleX(1.0254);transform-origin:0 0;">(5,572)</div>
<div class="t" style="left:784.0px;top:462px;font-size:11.8px;color:#0000ff;transform:scaleX(1.0254);transform-origin:0 0;">-</div>
<div class="t" style="left:844.2px;top:463px;font-size:11.8px;color:#0000ff;transform:scaleX(1.0254);transform-origin:0 0;">(1,393)</div>
<div class="t" style="left:933.2px;top:463px;font-size:11.8px;color:#0000ff;transform:scaleX(1.0254);transform-origin:0 0;">(1,393)</div>
<div class="t" style="left:1022.2px;top:463px;font-size:11.8px;color:#0000ff;transform:scaleX(1.0254);transform-origin:0 0;">(1,393)</div>
<div class="t" style="left:1111.2px;top:463px;font-size:11.8px;color:#0000ff;transform:scaleX(1.0254);transform-origin:0 0;">(1,393)</div>
<div class="t" style="left:1229.0px;top:462px;font-size:11.8px;color:#0000ff;transform:scaleX(1.0254);transform-origin:0 0;">-</div>
<div class="t" style="left:1318.0px;top:462px;font-size:11.8px;color:#0000ff;transform:scaleX(1.0254);transform-origin:0 0;">-</div>
<div class="t" style="left:1407.0px;top:462px;font-size:11.8px;color:#0000ff;transform:scaleX(1.0254);transform-origin:0 0;">-</div>
<div class="t" style="left:1496.0px;top:462px;font-size:11.8px;color:#0000ff;transform:scaleX(1.0254);transform-origin:0 0;">-</div>
<div class="t" style="left:1585.0px;top:462px;font-size:11.8px;color:#0000ff;transform:scaleX(1.0254);transform-origin:0 0;">-</div>
<div class="t" style="left:1674.0px;top:462px;font-size:11.8px;color:#0000ff;transform:scaleX(1.0254);transform-origin:0 0;">-</div>
<div class="t" style="left:1763.0px;top:462px;font-size:11.8px;color:#0000ff;transform:scaleX(1.0254);transform-origin:0 0;">-</div>
<div class="t" style="left:1852.0px;top:462px;font-size:11.8px;color:#0000ff;transform:scaleX(1.0254);transform-origin:0 0;">-</div>
<div class="t" style="left:44.5px;top:480px;font-size:11.8px;color:#0000ff;transform:scaleX(1.0551);transform-origin:0 0;">Actuals period flag</div>
<div class="t" style="left:499.0px;top:479px;font-size:11.8px;color:#0000ff;transform:scaleX(1.0254);transform-origin:0 0;">-</div>
<div class="t" style="left:517.0px;top:480px;font-size:11.8px;color:#0000ff;transform:scaleX(1.1000);transform-origin:0 0;">flag</div>
<div class="t" style="left:674.0px;top:479px;font-size:11.8px;color:#0000ff;transform:scaleX(1.0254);transform-origin:0 0;">-</div>
<div class="t" style="left:763.8px;top:480px;font-size:11.8px;color:#0000ff;transform:scaleX(1.0254);transform-origin:0 0;">4</div>
<div class="t" style="left:784.0px;top:479px;font-size:11.8px;color:#0000ff;transform:scaleX(1.0254);transform-origin:0 0;">-</div>
<div class="t" style="left:871.8px;top:480px;font-size:11.8px;color:#0000ff;transform:scaleX(1.0254);transform-origin:0 0;">1</div>
<div class="t" style="left:960.8px;top:480px;font-size:11.8px;color:#0000ff;transform:scaleX(1.0254);transform-origin:0 0;">1</div>
<div class="t" style="left:1049.8px;top:480px;font-size:11.8px;color:#0000ff;transform:scaleX(1.0254);transform-origin:0 0;">1</div>
<div class="t" style="left:1138.8px;top:480px;font-size:11.8px;color:#0000ff;transform:scaleX(1.0254);transform-origin:0 0;">1</div>
<div class="t" style="left:1229.0px;top:479px;font-size:11.8px;color:#0000ff;transform:scaleX(1.0254);transform-origin:0 0;">-</div>
<div class="t" style="left:1318.0px;top:479px;font-size:11.8px;color:#0000ff;transform:scaleX(1.0254);transform-origin:0 0;">-</div>
<div class="t" style="left:1407.0px;top:479px;font-size:11.8px;color:#0000ff;transform:scaleX(1.0254);transform-origin:0 0;">-</div>
<div class="t" style="left:1496.0px;top:479px;font-size:11.8px;color:#0000ff;transform:scaleX(1.0254);transform-origin:0 0;">-</div>
<div class="t" style="left:1585.0px;top:479px;font-size:11.8px;color:#0000ff;transform:scaleX(1.0254);transform-origin:0 0;">-</div>
<div class="t" style="left:1674.0px;top:479px;font-size:11.8px;color:#0000ff;transform:scaleX(1.0254);transform-origin:0 0;">-</div>
<div class="t" style="left:1763.0px;top:479px;font-size:11.8px;color:#0000ff;transform:scaleX(1.0254);transform-origin:0 0;">-</div>
<div class="t" style="left:1852.0px;top:479px;font-size:11.8px;color:#0000ff;transform:scaleX(1.0254);transform-origin:0 0;">-</div>
<div class="t" style="left:44.5px;top:497px;font-size:11.8px;color:#000000;transform:scaleX(1.0551);transform-origin:0 0;">Container direct costs - Existing terminal due [F]</div>
<div class="t" style="left:499.0px;top:496px;font-size:11.8px;color:#000000;transform:scaleX(1.0254);transform-origin:0 0;">-</div>
<div class="t" style="left:517.0px;top:497px;font-size:11.8px;color:#000000;transform:scaleX(0.8983);transform-origin:0 0;">USD k</div>
<div class="t" style="left:642.5px;top:497px;font-size:11.8px;color:#000000;transform:scaleX(1.0254);transform-origin:0 0;">12,600</div>
<div class="t" style="left:723.4px;top:497px;font-size:11.8px;color:#000000;transform:scaleX(1.0254);transform-origin:0 0;">6,04,326</div>
<div class="t" style="left:784.0px;top:496px;font-size:11.8px;color:#000000;transform:scaleX(1.0254);transform-origin:0 0;">-</div>
<div class="t" style="left:873.0px;top:496px;font-size:11.8px;color:#000000;transform:scaleX(1.0254);transform-origin:0 0;">-</div>
<div class="t" style="left:962.0px;top:496px;font-size:11.8px;color:#000000;transform:scaleX(1.0254);transform-origin:0 0;">-</div>
<div class="t" style="left:1051.0px;top:496px;font-size:11.8px;color:#000000;transform:scaleX(1.0254);transform-origin:0 0;">-</div>
<div class="t" style="left:1140.0px;top:496px;font-size:11.8px;color:#000000;transform:scaleX(1.0254);transform-origin:0 0;">-</div>
<div class="t" style="left:1204.2px;top:497px;font-size:11.8px;color:#000000;transform:scaleX(1.0254);transform-origin:0 0;">3,134</div>
<div class="t" style="left:1293.2px;top:497px;font-size:11.8px;color:#000000;transform:scaleX(1.0254);transform-origin:0 0;">3,134</div>
<div class="t" style="left:1382.2px;top:497px;font-size:11.8px;color:#000000;transform:scaleX(1.0254);transform-origin:0 0;">3,166</div>
<div class="t" style="left:1471.2px;top:497px;font-size:11.8px;color:#000000;transform:scaleX(1.0254);transform-origin:0 0;">3,166</div>
<div class="t" style="left:1560.2px;top:497px;font-size:11.8px;color:#000000;transform:scaleX(1.0254);transform-origin:0 0;">3,261</div>
<div class="t" style="left:1649.2px;top:497px;font-size:11.8px;color:#000000;transform:scaleX(1.0254);transform-origin:0 0;">3,261</div>
<div class="t" style="left:1738.2px;top:497px;font-size:11.8px;color:#000000;transform:scaleX(1.0254);transform-origin:0 0;">3,261</div>
<div class="t" style="left:1827.2px;top:497px;font-size:11.8px;color:#000000;transform:scaleX(1.0254);transform-origin:0 0;">3,261</div>
<div class="t" style="left:44.5px;top:514px;font-size:11.8px;color:#ff0000;transform:scaleX(1.0551);transform-origin:0 0;">Container direct costs - Existing terminal due</div>
<div class="t" style="left:517.0px;top:514px;font-size:11.8px;color:#ff0000;transform:scaleX(0.8983);transform-origin:0 0;">USD k</div>
<div class="t" style="left:642.5px;top:514px;font-size:11.8px;color:#ff0000;transform:scaleX(1.0254);transform-origin:0 0;">12,600</div>
<div class="t" style="left:723.4px;top:514px;font-size:11.8px;color:#ff0000;transform:scaleX(1.0254);transform-origin:0 0;">6,09,898</div>
<div class="t" style="left:848.2px;top:514px;font-size:11.8px;color:#ff0000;transform:scaleX(1.0254);transform-origin:0 0;">1,393</div>
<div class="t" style="left:937.2px;top:514px;font-size:11.8px;color:#ff0000;transform:scaleX(1.0254);transform-origin:0 0;">1,393</div>
<div class="t" style="left:1026.2px;top:514px;font-size:11.8px;color:#ff0000;transform:scaleX(1.0254);transform-origin:0 0;">1,393</div>
<div class="t" style="left:1115.2px;top:514px;font-size:11.8px;color:#ff0000;transform:scaleX(1.0254);transform-origin:0 0;">1,393</div>
<div class="t" style="left:1204.2px;top:514px;font-size:11.8px;color:#ff0000;transform:scaleX(1.0254);transform-origin:0 0;">3,134</div>
<div class="t" style="left:1293.2px;top:514px;font-size:11.8px;color:#ff0000;transform:scaleX(1.0254);transform-origin:0 0;">3,134</div>
<div class="t" style="left:1382.2px;top:514px;font-size:11.8px;color:#ff0000;transform:scaleX(1.0254);transform-origin:0 0;">3,166</div>
<div class="t" style="left:1471.2px;top:514px;font-size:11.8px;color:#ff0000;transform:scaleX(1.0254);transform-origin:0 0;">3,166</div>
<div class="t" style="left:1560.2px;top:514px;font-size:11.8px;color:#ff0000;transform:scaleX(1.0254);transform-origin:0 0;">3,261</div>
<div class="t" style="left:1649.2px;top:514px;font-size:11.8px;color:#ff0000;transform:scaleX(1.0254);transform-origin:0 0;">3,261</div>
<div class="t" style="left:1738.2px;top:514px;font-size:11.8px;color:#ff0000;transform:scaleX(1.0254);transform-origin:0 0;">3,261</div>
<div class="t" style="left:1827.2px;top:514px;font-size:11.8px;color:#ff0000;transform:scaleX(1.0254);transform-origin:0 0;">3,261</div>
<div class="t" style="left:15.5px;top:549px;font-size:11.3px;color:#000;font-weight:bold;transform:scaleX(0.9900);transform-origin:0 0;">1.1.2. Liquid bulk direct costs - Existing terminal due</div>
<div class="t" style="left:44.5px;top:567px;font-size:11.8px;color:#0000ff;transform:scaleX(1.0551);transform-origin:0 0;">Liquid bulk revenue - Existing terminal - Transshipment</div>
<div class="t" style="left:499.0px;top:566px;font-size:11.8px;color:#0000ff;transform:scaleX(1.0254);transform-origin:0 0;">-</div>
<div class="t" style="left:517.0px;top:567px;font-size:11.8px;color:#0000ff;transform:scaleX(0.8983);transform-origin:0 0;">USD k</div>
<div class="t" style="left:666.0px;top:567px;font-size:11.8px;color:#0000ff;transform:scaleX(1.0254);transform-origin:0 0;">77</div>
<div class="t" style="left:740.2px;top:567px;font-size:11.8px;color:#0000ff;transform:scaleX(1.0254);transform-origin:0 0;">3,687</div>
<div class="t" style="left:784.0px;top:566px;font-size:11.8px;color:#0000ff;transform:scaleX(1.0254);transform-origin:0 0;">-</div>
<div class="t" style="left:873.0px;top:566px;font-size:11.8px;color:#0000ff;transform:scaleX(1.0254);transform-origin:0 0;">-</div>
<div class="t" style="left:962.0px;top:566px;font-size:11.8px;color:#0000ff;transform:scaleX(1.0254);transform-origin:0 0;">-</div>
<div class="t" style="left:1051.0px;top:566px;font-size:11.8px;color:#0000ff;transform:scaleX(1.0254);transform-origin:0 0;">-</div>
<div class="t" style="left:1140.0px;top:566px;font-size:11.8px;color:#0000ff;transform:scaleX(1.0254);transform-origin:0 0;">-</div>
<div class="t" style="left:1221.0px;top:567px;font-size:11.8px;color:#0000ff;transform:scaleX(1.0254);transform-origin:0 0;">19</div>
<div class="t" style="left:1310.0px;top:567px;font-size:11.8px;color:#0000ff;transform:scaleX(1.0254);transform-origin:0 0;">19</div>
<div class="t" style="left:1399.0px;top:567px;font-size:11.8px;color:#0000ff;transform:scaleX(1.0254);transform-origin:0 0;">19</div>
<div class="t" style="left:1488.0px;top:567px;font-size:11.8px;color:#0000ff;transform:scaleX(1.0254);transform-origin:0 0;">19</div>
<div class="t" style="left:1577.0px;top:567px;font-size:11.8px;color:#0000ff;transform:scaleX(1.0254);transform-origin:0 0;">20</div>
<div class="t" style="left:1666.0px;top:567px;font-size:11.8px;color:#0000ff;transform:scaleX(1.0254);transform-origin:0 0;">20</div>
<div class="t" style="left:1755.0px;top:567px;font-size:11.8px;color:#0000ff;transform:scaleX(1.0254);transform-origin:0 0;">20</div>
<div class="t" style="left:1844.0px;top:567px;font-size:11.8px;color:#0000ff;transform:scaleX(1.0254);transform-origin:0 0;">20</div>
<div class="t" style="left:44.5px;top:584px;font-size:11.8px;color:#0000ff;transform:scaleX(1.0551);transform-origin:0 0;">Liquid bulk revenue - Existing terminal - Domestic</div>
<div class="t" style="left:499.0px;top:583px;font-size:11.8px;color:#0000ff;transform:scaleX(1.0254);transform-origin:0 0;">-</div>
<div class="t" style="left:517.0px;top:584px;font-size:11.8px;color:#0000ff;transform:scaleX(0.8983);transform-origin:0 0;">USD k</div>
<div class="t" style="left:659.3px;top:584px;font-size:11.8px;color:#0000ff;transform:scaleX(1.0254);transform-origin:0 0;">282</div>
<div class="t" style="left:733.5px;top:584px;font-size:11.8px;color:#0000ff;transform:scaleX(1.0254);transform-origin:0 0;">13,521</div>
<div class="t" style="left:784.0px;top:583px;font-size:11.8px;color:#0000ff;transform:scaleX(1.0254);transform-origin:0 0;">-</div>
<div class="t" style="left:873.0px;top:583px;font-size:11.8px;color:#0000ff;transform:scaleX(1.0254);transform-origin:0 0;">-</div>
<div class="t" style="left:962.0px;top:583px;font-size:11.8px;color:#0000ff;transform:scaleX(1.0254);transform-origin:0 0;">-</div>
<div class="t" style="left:1051.0px;top:583px;font-size:11.8px;color:#0000ff;transform:scaleX(1.0254);transform-origin:0 0;">-</div>
<div class="t" style="left:1140.0px;top:583px;font-size:11.8px;color:#0000ff;transform:scaleX(1.0254);transform-origin:0 0;">-</div>
<div class="t" style="left:1221.0px;top:584px;font-size:11.8px;color:#0000ff;transform:scaleX(1.0254);transform-origin:0 0;">70</div>
<div class="t" style="left:1310.0px;top:584px;font-size:11.8px;color:#0000ff;transform:scaleX(1.0254);transform-origin:0 0;">70</div>
<div class="t" style="left:1399.0px;top:584px;font-size:11.8px;color:#0000ff;transform:scaleX(1.0254);transform-origin:0 0;">71</div>
<div class="t" style="left:1488.0px;top:584px;font-size:11.8px;color:#0000ff;transform:scaleX(1.0254);transform-origin:0 0;">71</div>
<div class="t" style="left:1577.0px;top:584px;font-size:11.8px;color:#0000ff;transform:scaleX(1.0254);transform-origin:0 0;">73</div>
<div class="t" style="left:1666.0px;top:584px;font-size:11.8px;color:#0000ff;transform:scaleX(1.0254);transform-origin:0 0;">73</div>
<div class="t" style="left:1755.0px;top:584px;font-size:11.8px;color:#0000ff;transform:scaleX(1.0254);transform-origin:0 0;">73</div>
<div class="t" style="left:1844.0px;top:584px;font-size:11.8px;color:#0000ff;transform:scaleX(1.0254);transform-origin:0 0;">73</div>
<div class="r" style="left:44.5px;top:607px;width:375.5px;height:20px;overflow:hidden;"><div class="t" style="left:0;top:0;font-size:11.8px;color:#0000ff;transform:scaleX(1.0551);transform-origin:0 0;">Liquid bulk direct costs - Existing terminal as % of Revenue - Transshipment</div></div>
<div class="t" style="left:499.0px;top:606px;font-size:11.8px;color:#0000ff;transform:scaleX(1.0254);transform-origin:0 0;">-</div>
<div class="t" style="left:517.0px;top:607px;font-size:11.8px;color:#0000ff;transform:scaleX(1.0551);transform-origin:0 0;">%</div>
<div class="t" style="left:674.0px;top:606px;font-size:11.8px;color:#0000ff;transform:scaleX(1.0254);transform-origin:0 0;">-</div>
<div class="t" style="left:765.0px;top:606px;font-size:11.8px;color:#0000ff;transform:scaleX(1.0254);transform-origin:0 0;">-</div>
<div class="t" style="left:784.0px;top:606px;font-size:11.8px;color:#0000ff;transform:scaleX(1.0254);transform-origin:0 0;">-</div>
<div class="t" style="left:873.0px;top:606px;font-size:11.8px;color:#0000ff;transform:scaleX(1.0254);transform-origin:0 0;">-</div>
<div class="t" style="left:962.0px;top:606px;font-size:11.8px;color:#0000ff;transform:scaleX(1.0254);transform-origin:0 0;">-</div>
<div class="t" style="left:1051.0px;top:606px;font-size:11.8px;color:#0000ff;transform:scaleX(1.0254);transform-origin:0 0;">-</div>
<div class="t" style="left:1140.0px;top:606px;font-size:11.8px;color:#0000ff;transform:scaleX(1.0254);transform-origin:0 0;">-</div>
<div class="t" style="left:1195.2px;top:607px;font-size:11.8px;color:#0000ff;transform:scaleX(0.9831);transform-origin:0 0;">35.00%</div>
<div class="t" style="left:1284.2px;top:607px;font-size:11.8px;color:#0000ff;transform:scaleX(0.9831);transform-origin:0 0;">35.00%</div>
<div class="t" style="left:1373.2px;top:607px;font-size:11.8px;color:#0000ff;transform:scaleX(0.9831);transform-origin:0 0;">35.00%</div>
<div class="t" style="left:1462.2px;top:607px;font-size:11.8px;color:#0000ff;transform:scaleX(0.9831);transform-origin:0 0;">35.00%</div>
<div class="t" style="left:1551.2px;top:607px;font-size:11.8px;color:#0000ff;transform:scaleX(0.9831);transform-origin:0 0;">35.00%</div>
<div class="t" style="left:1640.2px;top:607px;font-size:11.8px;color:#0000ff;transform:scaleX(0.9831);transform-origin:0 0;">35.00%</div>
<div class="t" style="left:1729.2px;top:607px;font-size:11.8px;color:#0000ff;transform:scaleX(0.9831);transform-origin:0 0;">35.00%</div>
<div class="t" style="left:1818.2px;top:607px;font-size:11.8px;color:#0000ff;transform:scaleX(0.9831);transform-origin:0 0;">35.00%</div>
<div class="r" style="left:44.5px;top:624px;width:375.5px;height:20px;overflow:hidden;"><div class="t" style="left:0;top:0;font-size:11.8px;color:#0000ff;transform:scaleX(1.0551);transform-origin:0 0;">Liquid bulk direct costs - Existing terminal as % of Revenue - Domestic</div></div>
<div class="t" style="left:499.0px;top:623px;font-size:11.8px;color:#0000ff;transform:scaleX(1.0254);transform-origin:0 0;">-</div>
<div class="t" style="left:517.0px;top:624px;font-size:11.8px;color:#0000ff;transform:scaleX(1.0551);transform-origin:0 0;">%</div>
<div class="t" style="left:674.0px;top:623px;font-size:11.8px;color:#0000ff;transform:scaleX(1.0254);transform-origin:0 0;">-</div>
<div class="t" style="left:765.0px;top:623px;font-size:11.8px;color:#0000ff;transform:scaleX(1.0254);transform-origin:0 0;">-</div>
<div class="t" style="left:784.0px;top:623px;font-size:11.8px;color:#0000ff;transform:scaleX(1.0254);transform-origin:0 0;">-</div>
<div class="t" style="left:873.0px;top:623px;font-size:11.8px;color:#0000ff;transform:scaleX(1.0254);transform-origin:0 0;">-</div>
<div class="t" style="left:962.0px;top:623px;font-size:11.8px;color:#0000ff;transform:scaleX(1.0254);transform-origin:0 0;">-</div>
<div class="t" style="left:1051.0px;top:623px;font-size:11.8px;color:#0000ff;transform:scaleX(1.0254);transform-origin:0 0;">-</div>
<div class="t" style="left:1140.0px;top:623px;font-size:11.8px;color:#0000ff;transform:scaleX(1.0254);transform-origin:0 0;">-</div>
<div class="t" style="left:1195.2px;top:624px;font-size:11.8px;color:#0000ff;transform:scaleX(0.9831);transform-origin:0 0;">20.00%</div>
<div class="t" style="left:1284.2px;top:624px;font-size:11.8px;color:#0000ff;transform:scaleX(0.9831);transform-origin:0 0;">20.00%</div>
<div class="t" style="left:1373.2px;top:624px;font-size:11.8px;color:#0000ff;transform:scaleX(0.9831);transform-origin:0 0;">20.00%</div>
<div class="t" style="left:1462.2px;top:624px;font-size:11.8px;color:#0000ff;transform:scaleX(0.9831);transform-origin:0 0;">20.00%</div>
<div class="t" style="left:1551.2px;top:624px;font-size:11.8px;color:#0000ff;transform:scaleX(0.9831);transform-origin:0 0;">20.00%</div>
<div class="t" style="left:1640.2px;top:624px;font-size:11.8px;color:#0000ff;transform:scaleX(0.9831);transform-origin:0 0;">20.00%</div>
<div class="t" style="left:1729.2px;top:624px;font-size:11.8px;color:#0000ff;transform:scaleX(0.9831);transform-origin:0 0;">20.00%</div>
<div class="t" style="left:1818.2px;top:624px;font-size:11.8px;color:#0000ff;transform:scaleX(0.9831);transform-origin:0 0;">20.00%</div>
<div class="t" style="left:44.5px;top:647px;font-size:11.8px;color:#0000ff;transform:scaleX(1.0551);transform-origin:0 0;">Phase flag - [p11]</div>
<div class="t" style="left:499.0px;top:646px;font-size:11.8px;color:#0000ff;transform:scaleX(1.0254);transform-origin:0 0;">-</div>
<div class="t" style="left:517.0px;top:647px;font-size:11.8px;color:#0000ff;transform:scaleX(1.1000);transform-origin:0 0;">flag</div>
<div class="t" style="left:672.8px;top:647px;font-size:11.8px;color:#0000ff;transform:scaleX(1.0254);transform-origin:0 0;">4</div>
<div class="t" style="left:750.3px;top:647px;font-size:11.8px;color:#0000ff;transform:scaleX(1.0254);transform-origin:0 0;">124</div>
<div class="t" style="left:784.0px;top:646px;font-size:11.8px;color:#0000ff;transform:scaleX(1.0254);transform-origin:0 0;">-</div>
<div class="t" style="left:871.8px;top:647px;font-size:11.8px;color:#0000ff;transform:scaleX(1.0254);transform-origin:0 0;">1</div>
<div class="t" style="left:960.8px;top:647px;font-size:11.8px;color:#0000ff;transform:scaleX(1.0254);transform-origin:0 0;">1</div>
<div class="t" style="left:1049.8px;top:647px;font-size:11.8px;color:#0000ff;transform:scaleX(1.0254);transform-origin:0 0;">1</div>
<div class="t" style="left:1138.8px;top:647px;font-size:11.8px;color:#0000ff;transform:scaleX(1.0254);transform-origin:0 0;">1</div>
<div class="t" style="left:1227.8px;top:647px;font-size:11.8px;color:#0000ff;transform:scaleX(1.0254);transform-origin:0 0;">1</div>
<div class="t" style="left:1316.8px;top:647px;font-size:11.8px;color:#0000ff;transform:scaleX(1.0254);transform-origin:0 0;">1</div>
<div class="t" style="left:1405.8px;top:647px;font-size:11.8px;color:#0000ff;transform:scaleX(1.0254);transform-origin:0 0;">1</div>
<div class="t" style="left:1494.8px;top:647px;font-size:11.8px;color:#0000ff;transform:scaleX(1.0254);transform-origin:0 0;">1</div>
<div class="t" style="left:1583.8px;top:647px;font-size:11.8px;color:#0000ff;transform:scaleX(1.0254);transform-origin:0 0;">1</div>
<div class="t" style="left:1672.8px;top:647px;font-size:11.8px;color:#0000ff;transform:scaleX(1.0254);transform-origin:0 0;">1</div>
<div class="t" style="left:1761.8px;top:647px;font-size:11.8px;color:#0000ff;transform:scaleX(1.0254);transform-origin:0 0;">1</div>
<div class="t" style="left:1850.8px;top:647px;font-size:11.8px;color:#0000ff;transform:scaleX(1.0254);transform-origin:0 0;">1</div>
<div class="t" style="left:44.5px;top:670px;font-size:11.8px;color:#0000ff;transform:scaleX(1.0551);transform-origin:0 0;">Forecast period flag</div>
<div class="t" style="left:499.0px;top:669px;font-size:11.8px;color:#0000ff;transform:scaleX(1.0254);transform-origin:0 0;">-</div>
<div class="t" style="left:517.0px;top:670px;font-size:11.8px;color:#0000ff;transform:scaleX(1.1000);transform-origin:0 0;">flag</div>
<div class="t" style="left:672.8px;top:670px;font-size:11.8px;color:#0000ff;transform:scaleX(1.0254);transform-origin:0 0;">4</div>
<div class="t" style="left:750.3px;top:670px;font-size:11.8px;color:#0000ff;transform:scaleX(1.0254);transform-origin:0 0;">120</div>
<div class="t" style="left:784.0px;top:669px;font-size:11.8px;color:#0000ff;transform:scaleX(1.0254);transform-origin:0 0;">-</div>
<div class="t" style="left:873.0px;top:669px;font-size:11.8px;color:#0000ff;transform:scaleX(1.0254);transform-origin:0 0;">-</div>
<div class="t" style="left:962.0px;top:669px;font-size:11.8px;color:#0000ff;transform:scaleX(1.0254);transform-origin:0 0;">-</div>
<div class="t" style="left:1051.0px;top:669px;font-size:11.8px;color:#0000ff;transform:scaleX(1.0254);transform-origin:0 0;">-</div>
<div class="t" style="left:1140.0px;top:669px;font-size:11.8px;color:#0000ff;transform:scaleX(1.0254);transform-origin:0 0;">-</div>
<div class="t" style="left:1227.8px;top:670px;font-size:11.8px;color:#0000ff;transform:scaleX(1.0254);transform-origin:0 0;">1</div>
<div class="t" style="left:1316.8px;top:670px;font-size:11.8px;color:#0000ff;transform:scaleX(1.0254);transform-origin:0 0;">1</div>
<div class="t" style="left:1405.8px;top:670px;font-size:11.8px;color:#0000ff;transform:scaleX(1.0254);transform-origin:0 0;">1</div>
<div class="t" style="left:1494.8px;top:670px;font-size:11.8px;color:#0000ff;transform:scaleX(1.0254);transform-origin:0 0;">1</div>
<div class="t" style="left:1583.8px;top:670px;font-size:11.8px;color:#0000ff;transform:scaleX(1.0254);transform-origin:0 0;">1</div>
<div class="t" style="left:1672.8px;top:670px;font-size:11.8px;color:#0000ff;transform:scaleX(1.0254);transform-origin:0 0;">1</div>
<div class="t" style="left:1761.8px;top:670px;font-size:11.8px;color:#0000ff;transform:scaleX(1.0254);transform-origin:0 0;">1</div>
<div class="t" style="left:1850.8px;top:670px;font-size:11.8px;color:#0000ff;transform:scaleX(1.0254);transform-origin:0 0;">1</div>
<div class="t" style="left:44.5px;top:693px;font-size:11.8px;color:#0000ff;transform:scaleX(1.0551);transform-origin:0 0;">Sensitivity factor - Costs</div>
<div class="t" style="left:499.0px;top:692px;font-size:11.8px;color:#0000ff;transform:scaleX(1.0254);transform-origin:0 0;">-</div>
<div class="t" style="left:517.0px;top:693px;font-size:11.8px;color:#0000ff;transform:scaleX(1.1000);transform-origin:0 0;">factor</div>
<div class="t" style="left:674.0px;top:692px;font-size:11.8px;color:#0000ff;transform:scaleX(1.0254);transform-origin:0 0;">-</div>
<div class="t" style="left:765.0px;top:692px;font-size:11.8px;color:#0000ff;transform:scaleX(1.0254);transform-origin:0 0;">-</div>
<div class="t" style="left:784.0px;top:692px;font-size:11.8px;color:#0000ff;transform:scaleX(1.0254);transform-origin:0 0;">-</div>
<div class="t" style="left:841.5px;top:693px;font-size:11.8px;color:#0000ff;transform:scaleX(1.0254);transform-origin:0 0;">1.0000</div>
<div class="t" style="left:930.5px;top:693px;font-size:11.8px;color:#0000ff;transform:scaleX(1.0254);transform-origin:0 0;">1.0000</div>
<div class="t" style="left:1019.5px;top:693px;font-size:11.8px;color:#0000ff;transform:scaleX(1.0254);transform-origin:0 0;">1.0000</div>
<div class="t" style="left:1108.5px;top:693px;font-size:11.8px;color:#0000ff;transform:scaleX(1.0254);transform-origin:0 0;">1.0000</div>
<div class="t" style="left:1197.5px;top:693px;font-size:11.8px;color:#0000ff;transform:scaleX(1.0254);transform-origin:0 0;">1.0000</div>
<div class="t" style="left:1286.5px;top:693px;font-size:11.8px;color:#0000ff;transform:scaleX(1.0254);transform-origin:0 0;">1.0000</div>
<div class="t" style="left:1375.5px;top:693px;font-size:11.8px;color:#0000ff;transform:scaleX(1.0254);transform-origin:0 0;">1.0000</div>
<div class="t" style="left:1464.5px;top:693px;font-size:11.8px;color:#0000ff;transform:scaleX(1.0254);transform-origin:0 0;">1.0000</div>
<div class="t" style="left:1553.5px;top:693px;font-size:11.8px;color:#0000ff;transform:scaleX(1.0254);transform-origin:0 0;">1.0000</div>
<div class="t" style="left:1642.5px;top:693px;font-size:11.8px;color:#0000ff;transform:scaleX(1.0254);transform-origin:0 0;">1.0000</div>
<div class="t" style="left:1731.5px;top:693px;font-size:11.8px;color:#0000ff;transform:scaleX(1.0254);transform-origin:0 0;">1.0000</div>
<div class="t" style="left:1820.5px;top:693px;font-size:11.8px;color:#0000ff;transform:scaleX(1.0254);transform-origin:0 0;">1.0000</div>
<div class="t" style="left:44.5px;top:716px;font-size:11.8px;color:#000000;transform:scaleX(1.0551);transform-origin:0 0;">Liquid bulk direct costs - Existing terminal - Transshipment</div>
<div class="t" style="left:517.0px;top:716px;font-size:11.8px;color:#000000;transform:scaleX(0.8983);transform-origin:0 0;">USD k</div>
<div class="t" style="left:666.0px;top:716px;font-size:11.8px;color:#000000;transform:scaleX(1.0254);transform-origin:0 0;">27</div>
<div class="t" style="left:740.2px;top:716px;font-size:11.8px;color:#000000;transform:scaleX(1.0254);transform-origin:0 0;">1,291</div>
<div class="t" style="left:873.0px;top:715px;font-size:11.8px;color:#000000;transform:scaleX(1.0254);transform-origin:0 0;">-</div>
<div class="t" style="left:962.0px;top:715px;font-size:11.8px;color:#000000;transform:scaleX(1.0254);transform-origin:0 0;">-</div>
<div class="t" style="left:1051.0px;top:715px;font-size:11.8px;color:#000000;transform:scaleX(1.0254);transform-origin:0 0;">-</div>
<div class="t" style="left:1140.0px;top:715px;font-size:11.8px;color:#000000;transform:scaleX(1.0254);transform-origin:0 0;">-</div>
<div class="t" style="left:1227.8px;top:716px;font-size:11.8px;color:#000000;transform:scaleX(1.0254);transform-origin:0 0;">7</div>
<div class="t" style="left:1316.8px;top:716px;font-size:11.8px;color:#000000;transform:scaleX(1.0254);transform-origin:0 0;">7</div>
<div class="t" style="left:1405.8px;top:716px;font-size:11.8px;color:#000000;transform:scaleX(1.0254);transform-origin:0 0;">7</div>
<div class="t" style="left:1494.8px;top:716px;font-size:11.8px;color:#000000;transform:scaleX(1.0254);transform-origin:0 0;">7</div>
<div class="t" style="left:1583.8px;top:716px;font-size:11.8px;color:#000000;transform:scaleX(1.0254);transform-origin:0 0;">7</div>
<div class="t" style="left:1672.8px;top:716px;font-size:11.8px;color:#000000;transform:scaleX(1.0254);transform-origin:0 0;">7</div>
<div class="t" style="left:1761.8px;top:716px;font-size:11.8px;color:#000000;transform:scaleX(1.0254);transform-origin:0 0;">7</div>
<div class="t" style="left:1850.8px;top:716px;font-size:11.8px;color:#000000;transform:scaleX(1.0254);transform-origin:0 0;">7</div>
<div class="t" style="left:44.5px;top:733px;font-size:11.8px;color:#000000;transform:scaleX(1.0551);transform-origin:0 0;">Liquid bulk direct costs - Existing terminal - Domestic</div>
<div class="t" style="left:517.0px;top:733px;font-size:11.8px;color:#000000;transform:scaleX(0.8983);transform-origin:0 0;">USD k</div>
<div class="t" style="left:666.0px;top:733px;font-size:11.8px;color:#000000;transform:scaleX(1.0254);transform-origin:0 0;">56</div>
<div class="t" style="left:740.2px;top:733px;font-size:11.8px;color:#000000;transform:scaleX(1.0254);transform-origin:0 0;">2,704</div>
<div class="t" style="left:873.0px;top:732px;font-size:11.8px;color:#000000;transform:scaleX(1.0254);transform-origin:0 0;">-</div>
<div class="t" style="left:962.0px;top:732px;font-size:11.8px;color:#000000;transform:scaleX(1.0254);transform-origin:0 0;">-</div>
<div class="t" style="left:1051.0px;top:732px;font-size:11.8px;color:#000000;transform:scaleX(1.0254);transform-origin:0 0;">-</div>
<div class="t" style="left:1140.0px;top:732px;font-size:11.8px;color:#000000;transform:scaleX(1.0254);transform-origin:0 0;">-</div>
<div class="t" style="left:1221.0px;top:733px;font-size:11.8px;color:#000000;transform:scaleX(1.0254);transform-origin:0 0;">14</div>
<div class="t" style="left:1310.0px;top:733px;font-size:11.8px;color:#000000;transform:scaleX(1.0254);transform-origin:0 0;">14</div>
<div class="t" style="left:1399.0px;top:733px;font-size:11.8px;color:#000000;transform:scaleX(1.0254);transform-origin:0 0;">14</div>
<div class="t" style="left:1488.0px;top:733px;font-size:11.8px;color:#000000;transform:scaleX(1.0254);transform-origin:0 0;">14</div>
<div class="t" style="left:1577.0px;top:733px;font-size:11.8px;color:#000000;transform:scaleX(1.0254);transform-origin:0 0;">15</div>
<div class="t" style="left:1666.0px;top:733px;font-size:11.8px;color:#000000;transform:scaleX(1.0254);transform-origin:0 0;">15</div>
<div class="t" style="left:1755.0px;top:733px;font-size:11.8px;color:#000000;transform:scaleX(1.0254);transform-origin:0 0;">15</div>
<div class="t" style="left:1844.0px;top:733px;font-size:11.8px;color:#000000;transform:scaleX(1.0254);transform-origin:0 0;">15</div>
<div class="r" style="left:39px;top:756px;width:1790px;height:1px;background:#8c8c8c;"></div>
<div class="r" style="left:39px;top:773px;width:1790px;height:1px;background:#8c8c8c;"></div>
<div class="t" style="left:44.5px;top:756px;font-size:11.8px;color:#000000;transform:scaleX(1.0551);transform-origin:0 0;">Liquid bulk direct costs - Existing terminal due [F]</div>
<div class="t" style="left:517.0px;top:756px;font-size:11.8px;color:#000000;transform:scaleX(0.8983);transform-origin:0 0;">USD k</div>
<div class="t" style="left:666.0px;top:756px;font-size:11.8px;color:#000000;transform:scaleX(1.0254);transform-origin:0 0;">83</div>
<div class="t" style="left:740.2px;top:756px;font-size:11.8px;color:#000000;transform:scaleX(1.0254);transform-origin:0 0;">3,995</div>
<div class="t" style="left:873.0px;top:755px;font-size:11.8px;color:#000000;transform:scaleX(1.0254);transform-origin:0 0;">-</div>
<div class="t" style="left:962.0px;top:755px;font-size:11.8px;color:#000000;transform:scaleX(1.0254);transform-origin:0 0;">-</div>
<div class="t" style="left:1051.0px;top:755px;font-size:11.8px;color:#000000;transform:scaleX(1.0254);transform-origin:0 0;">-</div>
<div class="t" style="left:1140.0px;top:755px;font-size:11.8px;color:#000000;transform:scaleX(1.0254);transform-origin:0 0;">-</div>
<div class="t" style="left:1221.0px;top:756px;font-size:11.8px;color:#000000;transform:scaleX(1.0254);transform-origin:0 0;">21</div>
<div class="t" style="left:1310.0px;top:756px;font-size:11.8px;color:#000000;transform:scaleX(1.0254);transform-origin:0 0;">21</div>
<div class="t" style="left:1399.0px;top:756px;font-size:11.8px;color:#000000;transform:scaleX(1.0254);transform-origin:0 0;">21</div>
<div class="t" style="left:1488.0px;top:756px;font-size:11.8px;color:#000000;transform:scaleX(1.0254);transform-origin:0 0;">21</div>
<div class="t" style="left:1577.0px;top:756px;font-size:11.8px;color:#000000;transform:scaleX(1.0254);transform-origin:0 0;">22</div>
<div class="t" style="left:1666.0px;top:756px;font-size:11.8px;color:#000000;transform:scaleX(1.0254);transform-origin:0 0;">22</div>
<div class="t" style="left:1755.0px;top:756px;font-size:11.8px;color:#000000;transform:scaleX(1.0254);transform-origin:0 0;">22</div>
<div class="t" style="left:1844.0px;top:756px;font-size:11.8px;color:#000000;transform:scaleX(1.0254);transform-origin:0 0;">22</div>
<div class="t" style="left:25.0px;top:790px;font-size:11.8px;color:#000;transform:scaleX(0.9500);transform-origin:0 0;">A&amp;F</div>
<div class="r" style="left:22px;top:805px;width:28px;height:1px;background:#000;"></div>
<div class="t" style="left:44.5px;top:807px;font-size:11.8px;color:#0000ff;transform:scaleX(1.0551);transform-origin:0 0;">Liquid bulk direct costs - Existing terminal due [A]</div>
<div class="t" style="left:499.0px;top:806px;font-size:11.8px;color:#0000ff;transform:scaleX(1.0254);transform-origin:0 0;">-</div>
<div class="t" style="left:517.0px;top:807px;font-size:11.8px;color:#0000ff;transform:scaleX(0.8983);transform-origin:0 0;">USD k</div>
<div class="t" style="left:674.0px;top:806px;font-size:11.8px;color:#0000ff;transform:scaleX(1.0254);transform-origin:0 0;">-</div>
<div class="t" style="left:737.1px;top:807px;font-size:11.8px;color:#0000ff;transform:scaleX(1.0254);transform-origin:0 0;">(1,114)</div>
<div class="t" style="left:784.0px;top:806px;font-size:11.8px;color:#0000ff;transform:scaleX(1.0254);transform-origin:0 0;">-</div>
<div class="t" style="left:854.3px;top:807px;font-size:11.8px;color:#0000ff;transform:scaleX(1.0254);transform-origin:0 0;">(279)</div>
<div class="t" style="left:943.3px;top:807px;font-size:11.8px;color:#0000ff;transform:scaleX(1.0254);transform-origin:0 0;">(279)</div>
<div class="t" style="left:1032.3px;top:807px;font-size:11.8px;color:#0000ff;transform:scaleX(1.0254);transform-origin:0 0;">(279)</div>
<div class="t" style="left:1121.3px;top:807px;font-size:11.8px;color:#0000ff;transform:scaleX(1.0254);transform-origin:0 0;">(279)</div>
<div class="t" style="left:1229.0px;top:806px;font-size:11.8px;color:#0000ff;transform:scaleX(1.0254);transform-origin:0 0;">-</div>
<div class="t" style="left:1318.0px;top:806px;font-size:11.8px;color:#0000ff;transform:scaleX(1.0254);transform-origin:0 0;">-</div>
<div class="t" style="left:1407.0px;top:806px;font-size:11.8px;color:#0000ff;transform:scaleX(1.0254);transform-origin:0 0;">-</div>
<div class="t" style="left:1496.0px;top:806px;font-size:11.8px;color:#0000ff;transform:scaleX(1.0254);transform-origin:0 0;">-</div>
<div class="t" style="left:1585.0px;top:806px;font-size:11.8px;color:#0000ff;transform:scaleX(1.0254);transform-origin:0 0;">-</div>
<div class="t" style="left:1674.0px;top:806px;font-size:11.8px;color:#0000ff;transform:scaleX(1.0254);transform-origin:0 0;">-</div>
<div class="t" style="left:1763.0px;top:806px;font-size:11.8px;color:#0000ff;transform:scaleX(1.0254);transform-origin:0 0;">-</div>
<div class="t" style="left:1852.0px;top:806px;font-size:11.8px;color:#0000ff;transform:scaleX(1.0254);transform-origin:0 0;">-</div>
<div class="t" style="left:44.5px;top:824px;font-size:11.8px;color:#0000ff;transform:scaleX(1.0551);transform-origin:0 0;">Actuals period flag</div>
<div class="t" style="left:499.0px;top:823px;font-size:11.8px;color:#0000ff;transform:scaleX(1.0254);transform-origin:0 0;">-</div>
<div class="t" style="left:517.0px;top:824px;font-size:11.8px;color:#0000ff;transform:scaleX(1.1000);transform-origin:0 0;">flag</div>
<div class="t" style="left:674.0px;top:823px;font-size:11.8px;color:#0000ff;transform:scaleX(1.0254);transform-origin:0 0;">-</div>
<div class="t" style="left:763.8px;top:824px;font-size:11.8px;color:#0000ff;transform:scaleX(1.0254);transform-origin:0 0;">4</div>
<div class="t" style="left:784.0px;top:823px;font-size:11.8px;color:#0000ff;transform:scaleX(1.0254);transform-origin:0 0;">-</div>
<div class="t" style="left:871.8px;top:824px;font-size:11.8px;color:#0000ff;transform:scaleX(1.0254);transform-origin:0 0;">1</div>
<div class="t" style="left:960.8px;top:824px;font-size:11.8px;color:#0000ff;transform:scaleX(1.0254);transform-origin:0 0;">1</div>
<div class="t" style="left:1049.8px;top:824px;font-size:11.8px;color:#0000ff;transform:scaleX(1.0254);transform-origin:0 0;">1</div>
<div class="t" style="left:1138.8px;top:824px;font-size:11.8px;color:#0000ff;transform:scaleX(1.0254);transform-origin:0 0;">1</div>
<div class="t" style="left:1229.0px;top:823px;font-size:11.8px;color:#0000ff;transform:scaleX(1.0254);transform-origin:0 0;">-</div>
<div class="t" style="left:1318.0px;top:823px;font-size:11.8px;color:#0000ff;transform:scaleX(1.0254);transform-origin:0 0;">-</div>
<div class="t" style="left:1407.0px;top:823px;font-size:11.8px;color:#0000ff;transform:scaleX(1.0254);transform-origin:0 0;">-</div>
<div class="t" style="left:1496.0px;top:823px;font-size:11.8px;color:#0000ff;transform:scaleX(1.0254);transform-origin:0 0;">-</div>
<div class="t" style="left:1585.0px;top:823px;font-size:11.8px;color:#0000ff;transform:scaleX(1.0254);transform-origin:0 0;">-</div>
<div class="t" style="left:1674.0px;top:823px;font-size:11.8px;color:#0000ff;transform:scaleX(1.0254);transform-origin:0 0;">-</div>
<div class="t" style="left:1763.0px;top:823px;font-size:11.8px;color:#0000ff;transform:scaleX(1.0254);transform-origin:0 0;">-</div>
<div class="t" style="left:1852.0px;top:823px;font-size:11.8px;color:#0000ff;transform:scaleX(1.0254);transform-origin:0 0;">-</div>
<div class="t" style="left:44.5px;top:841px;font-size:11.8px;color:#000000;transform:scaleX(1.0551);transform-origin:0 0;">Liquid bulk direct costs - Existing terminal due [F]</div>
<div class="t" style="left:499.0px;top:840px;font-size:11.8px;color:#000000;transform:scaleX(1.0254);transform-origin:0 0;">-</div>
<div class="t" style="left:517.0px;top:841px;font-size:11.8px;color:#000000;transform:scaleX(0.8983);transform-origin:0 0;">USD k</div>
<div class="t" style="left:666.0px;top:841px;font-size:11.8px;color:#000000;transform:scaleX(1.0254);transform-origin:0 0;">83</div>
<div class="t" style="left:740.2px;top:841px;font-size:11.8px;color:#000000;transform:scaleX(1.0254);transform-origin:0 0;">3,995</div>
<div class="t" style="left:784.0px;top:840px;font-size:11.8px;color:#000000;transform:scaleX(1.0254);transform-origin:0 0;">-</div>
<div class="t" style="left:873.0px;top:840px;font-size:11.8px;color:#000000;transform:scaleX(1.0254);transform-origin:0 0;">-</div>
<div class="t" style="left:962.0px;top:840px;font-size:11.8px;color:#000000;transform:scaleX(1.0254);transform-origin:0 0;">-</div>
<div class="t" style="left:1051.0px;top:840px;font-size:11.8px;color:#000000;transform:scaleX(1.0254);transform-origin:0 0;">-</div>
<div class="t" style="left:1140.0px;top:840px;font-size:11.8px;color:#000000;transform:scaleX(1.0254);transform-origin:0 0;">-</div>
<div class="t" style="left:1221.0px;top:841px;font-size:11.8px;color:#000000;transform:scaleX(1.0254);transform-origin:0 0;">21</div>
<div class="t" style="left:1310.0px;top:841px;font-size:11.8px;color:#000000;transform:scaleX(1.0254);transform-origin:0 0;">21</div>
<div class="t" style="left:1399.0px;top:841px;font-size:11.8px;color:#000000;transform:scaleX(1.0254);transform-origin:0 0;">21</div>
<div class="t" style="left:1488.0px;top:841px;font-size:11.8px;color:#000000;transform:scaleX(1.0254);transform-origin:0 0;">21</div>
<div class="t" style="left:1577.0px;top:841px;font-size:11.8px;color:#000000;transform:scaleX(1.0254);transform-origin:0 0;">22</div>
<div class="t" style="left:1666.0px;top:841px;font-size:11.8px;color:#000000;transform:scaleX(1.0254);transform-origin:0 0;">22</div>
<div class="t" style="left:1755.0px;top:841px;font-size:11.8px;color:#000000;transform:scaleX(1.0254);transform-origin:0 0;">22</div>
<div class="t" style="left:1844.0px;top:841px;font-size:11.8px;color:#000000;transform:scaleX(1.0254);transform-origin:0 0;">22</div>
<div class="t" style="left:44.5px;top:858px;font-size:11.8px;color:#ff0000;transform:scaleX(1.0551);transform-origin:0 0;">Liquid bulk direct costs - Existing terminal due</div>
<div class="t" style="left:517.0px;top:858px;font-size:11.8px;color:#ff0000;transform:scaleX(0.8983);transform-origin:0 0;">USD k</div>
<div class="t" style="left:666.0px;top:858px;font-size:11.8px;color:#ff0000;transform:scaleX(1.0254);transform-origin:0 0;">83</div>
<div class="t" style="left:740.2px;top:858px;font-size:11.8px;color:#ff0000;transform:scaleX(1.0254);transform-origin:0 0;">5,109</div>
<div class="t" style="left:858.3px;top:858px;font-size:11.8px;color:#ff0000;transform:scaleX(1.0254);transform-origin:0 0;">279</div>
<div class="t" style="left:947.3px;top:858px;font-size:11.8px;color:#ff0000;transform:scaleX(1.0254);transform-origin:0 0;">279</div>
<div class="t" style="left:1036.3px;top:858px;font-size:11.8px;color:#ff0000;transform:scaleX(1.0254);transform-origin:0 0;">279</div>
<div class="t" style="left:1125.3px;top:858px;font-size:11.8px;color:#ff0000;transform:scaleX(1.0254);transform-origin:0 0;">279</div>
<div class="t" style="left:1221.0px;top:858px;font-size:11.8px;color:#ff0000;transform:scaleX(1.0254);transform-origin:0 0;">21</div>
<div class="t" style="left:1310.0px;top:858px;font-size:11.8px;color:#ff0000;transform:scaleX(1.0254);transform-origin:0 0;">21</div>
<div class="t" style="left:1399.0px;top:858px;font-size:11.8px;color:#ff0000;transform:scaleX(1.0254);transform-origin:0 0;">21</div>
<div class="t" style="left:1488.0px;top:858px;font-size:11.8px;color:#ff0000;transform:scaleX(1.0254);transform-origin:0 0;">21</div>
<div class="t" style="left:1577.0px;top:858px;font-size:11.8px;color:#ff0000;transform:scaleX(1.0254);transform-origin:0 0;">22</div>
<div class="t" style="left:1666.0px;top:858px;font-size:11.8px;color:#ff0000;transform:scaleX(1.0254);transform-origin:0 0;">22</div>
<div class="t" style="left:1755.0px;top:858px;font-size:11.8px;color:#ff0000;transform:scaleX(1.0254);transform-origin:0 0;">22</div>
<div class="t" style="left:1844.0px;top:858px;font-size:11.8px;color:#ff0000;transform:scaleX(1.0254);transform-origin:0 0;">22</div>
</div>
<div class="r" style="left:1894px;top:155px;width:1px;height:869px;background:#a6a6a6;"></div>
<div class="r" style="left:0px;top:1023px;width:1895px;height:1px;background:#a6a6a6;"></div>
<div class="r" style="left:1895px;top:136px;width:25px;height:888px;background:#e6e6e6;"></div>
<div class="r" style="left:1898px;top:157px;width:19px;height:847px;background:#d9d9d9;"></div>
<div class="r" style="left:1898px;top:138px;width:17px;height:17px;background:#fff;border:1px solid #c6c6c6;"></div>
<svg style="left:1902px;top:143px" width="10" height="6" viewBox="0 0 10 6"><path d="M0 6 H10 L5 0 Z" fill="#6e6e6e"/></svg>
<div class="r" style="left:1898px;top:157px;width:17px;height:143px;background:#fff;border:1px solid #c6c6c6;"></div>
<div class="r" style="left:1898px;top:1004px;width:17px;height:17px;background:#fff;border:1px solid #c6c6c6;"></div>
<svg style="left:1903px;top:1011px" width="10" height="6" viewBox="0 0 10 6"><path d="M0 0 H10 L5 6 Z" fill="#6e6e6e"/></svg>
<div class="r" style="left:0px;top:1024px;width:1920px;height:28px;background:#e6e6e6;"></div>
<div class="r" style="left:0px;top:1052px;width:1920px;height:1px;background:#cfcfcf;"></div>
<svg style="left:27px;top:1032px" width="8" height="11" viewBox="0 0 8 11"><path d="M7 0 V11 L0 5.5 Z" fill="#1e6e42"/></svg>
<svg style="left:56px;top:1032px" width="8" height="11" viewBox="0 0 8 11"><path d="M0 0 V11 L7 5.5 Z" fill="#1e6e42"/></svg>
<div class="r" style="left:82px;top:1038px;width:2px;height:2px;background:#1e6e42;"></div>
<div class="r" style="left:87px;top:1038px;width:2px;height:2px;background:#1e6e42;"></div>
<div class="r" style="left:92px;top:1038px;width:2px;height:2px;background:#1e6e42;"></div>
<div class="r" style="left:105.5px;top:1026px;width:49.5px;height:23px;background:#c9f7fb;"></div>
<div class="t" style="left:116.25px;top:1024px;font-size:16.5px;color:#000;transform:scaleX(0.9808);transform-origin:0 0;">Log</div>
<div class="r" style="left:160px;top:1026px;width:106px;height:23px;background:#2e74a0;"></div>
<div class="t" style="left:171.75px;top:1024px;font-size:16.5px;color:#fff;transform:scaleX(1.0097);transform-origin:0 0;">Dashboard</div>
<div class="r" style="left:271px;top:1026px;width:76px;height:23px;background:#2e74a0;"></div>
<div class="t" style="left:282.5px;top:1024px;font-size:16.5px;color:#fff;transform:scaleX(0.9805);transform-origin:0 0;">FinStat</div>
<div class="r" style="left:352px;top:1026px;width:77px;height:23px;background:#ffffcc;"></div>
<div class="t" style="left:362.5px;top:1024px;font-size:16.5px;color:#000;">Actuals</div>
<div class="r" style="left:434px;top:1026px;width:69px;height:23px;background:#ffffcc;"></div>
<div class="t" style="left:444.5px;top:1024px;font-size:16.5px;color:#000;transform:scaleX(1.0512);transform-origin:0 0;">Inputs</div>
<div class="r" style="left:508px;top:1026px;width:82px;height:23px;background:#c0c0c0;"></div>
<div class="t" style="left:518.25px;top:1024px;font-size:16.5px;color:#000;transform:scaleX(1.0255);transform-origin:0 0;">Convert</div>
<div class="r" style="left:595px;top:1026px;width:60px;height:23px;background:#c0c0c0;"></div>
<div class="t" style="left:605px;top:1024px;font-size:16.5px;color:#000;transform:scaleX(0.9294);transform-origin:0 0;">Flags</div>
<div class="r" style="left:660px;top:1026px;width:98px;height:23px;background:#c0c0c0;"></div>
<div class="t" style="left:670.75px;top:1024px;font-size:16.5px;color:#000;transform:scaleX(0.9852);transform-origin:0 0;">Escalation</div>
<div class="r" style="left:763px;top:1026px;width:80px;height:23px;background:#c0c0c0;"></div>
<div class="t" style="left:773.25px;top:1024px;font-size:16.5px;color:#000;transform:scaleX(1.0630);transform-origin:0 0;">Volume</div>
<div class="r" style="left:848px;top:1026px;width:64px;height:23px;background:#c0c0c0;"></div>
<div class="t" style="left:860.5px;top:1024px;font-size:16.5px;color:#000;transform:scaleX(1.0576);transform-origin:0 0;">Tariff</div>
<div class="r" style="left:917px;top:1026px;width:85.5px;height:23px;background:#c0c0c0;"></div>
<div class="t" style="left:927.5px;top:1024px;font-size:16.5px;color:#000;transform:scaleX(0.9728);transform-origin:0 0;">Revenue</div>
<div class="r" style="left:103px;top:1027px;width:1px;height:21px;background:#a0a0a0;"></div>
<div class="r" style="left:157px;top:1027px;width:1px;height:21px;background:#a0a0a0;"></div>
<div class="r" style="left:268px;top:1027px;width:1px;height:21px;background:#a0a0a0;"></div>
<div class="r" style="left:349px;top:1027px;width:1px;height:21px;background:#a0a0a0;"></div>
<div class="r" style="left:431px;top:1027px;width:1px;height:21px;background:#a0a0a0;"></div>
<div class="r" style="left:505px;top:1027px;width:1px;height:21px;background:#a0a0a0;"></div>
<div class="r" style="left:592px;top:1027px;width:1px;height:21px;background:#a0a0a0;"></div>
<div class="r" style="left:657px;top:1027px;width:1px;height:21px;background:#a0a0a0;"></div>
<div class="r" style="left:760px;top:1027px;width:1px;height:21px;background:#a0a0a0;"></div>
<div class="r" style="left:845px;top:1027px;width:1px;height:21px;background:#a0a0a0;"></div>
<div class="r" style="left:914px;top:1027px;width:1px;height:21px;background:#a0a0a0;"></div>
<div class="r" style="left:1005px;top:1023px;width:66px;height:26px;background:linear-gradient(#ffffff,#f2f2f2);border-left:1px solid #b0b0b0;border-right:1px solid #b0b0b0;"></div>
<div class="r" style="left:1005px;top:1047px;width:67px;height:2px;background:#217346;"></div>
<div class="t" style="left:1017.5px;top:1024px;font-size:16.5px;color:#217346;font-weight:bold;transform:scaleX(0.9107);transform-origin:0 0;">Costs</div>
<div class="r" style="left:1075px;top:1026px;width:4px;height:23px;background:#c0c0c0;"></div>
<div class="r" style="left:1086px;top:1040px;width:2px;height:2px;background:#1e6e42;"></div>
<div class="r" style="left:1091px;top:1040px;width:2px;height:2px;background:#1e6e42;"></div>
<div class="r" style="left:1096px;top:1040px;width:2px;height:2px;background:#1e6e42;"></div>
<svg style="left:1110px;top:1027px" width="22" height="22" viewBox="0 0 22 22"><circle cx="11" cy="11" r="9.5" fill="none" stroke="#6e6e6e" stroke-width="1.3"/><path d="M11 6 V16 M6 11 H16" stroke="#6e6e6e" stroke-width="1.5"/></svg>
<div class="r" style="left:1149px;top:1031px;width:2px;height:3px;background:#a8a8a8;"></div>
<div class="r" style="left:1149px;top:1036px;width:2px;height:3px;background:#a8a8a8;"></div>
<div class="r" style="left:1149px;top:1041px;width:2px;height:3px;background:#a8a8a8;"></div>
<div class="r" style="left:1167px;top:1028px;width:726px;height:19px;background:#d9d9d9;"></div>
<div class="r" style="left:1167px;top:1028px;width:17px;height:17px;background:#fff;border:1px solid #c6c6c6;"></div>
<svg style="left:1172px;top:1033px" width="6" height="9" viewBox="0 0 6 9"><path d="M6 0 V9 L0 4.5 Z" fill="#6e6e6e"/></svg>
<div class="r" style="left:1186px;top:1028px;width:78px;height:17px;background:#fff;border:1px solid #c6c6c6;"></div>
<div class="r" style="left:1874px;top:1028px;width:17px;height:17px;background:#fff;border:1px solid #c6c6c6;"></div>
<svg style="left:1881px;top:1033px" width="6" height="9" viewBox="0 0 6 9"><path d="M0 0 V9 L6 4.5 Z" fill="#6e6e6e"/></svg>
<div class="r" style="left:0px;top:1053px;width:1920px;height:25px;background:#f3f2f1;"></div>
<div class="t" style="left:9.3px;top:1057px;font-size:12.4px;color:#444444;">Ready</div>
<svg style="left:70px;top:1059px" width="19" height="16" viewBox="0 0 19 16"><path d="M1 15 V1 H17 V6" fill="none" stroke="#555" stroke-width="1.3"/><path d="M1 3.5 H17" stroke="#555" stroke-width="1.3"/><path d="M3 7 H7 M3 10 H6 M3 13 H7" stroke="#555" stroke-width="1.1"/><circle cx="12.5" cy="11" r="4.5" fill="#f3f2f1" stroke="#555" stroke-width="1.3"/><circle cx="12.5" cy="11" r="2" fill="#555"/></svg>
<div class="r" style="left:1555px;top:1053px;width:50px;height:25px;background:#d6d6d6;"></div>
<svg style="left:1571px;top:1057px" width="18" height="17" viewBox="0 0 18 17"><rect x="0.75" y="0.75" width="16" height="15" fill="none" stroke="#555" stroke-width="1.5"/><path d="M6 1 V16 M11.5 1 V16 M1 6 H17 M1 11 H17" stroke="#555" stroke-width="1.5"/></svg>
<svg style="left:1621px;top:1057px" width="18" height="17" viewBox="0 0 18 17"><rect x="0.75" y="0.75" width="16.5" height="15.5" fill="none" stroke="#555" stroke-width="1.5"/><rect x="3.5" y="3.5" width="11" height="10" fill="none" stroke="#555" stroke-width="1.2"/><path d="M6 6.5 H12 M6 9 H12 M6 11.5 H12" stroke="#555" stroke-width="1"/></svg>
<svg style="left:1671px;top:1057px" width="18" height="17" viewBox="0 0 18 17"><path d="M0.75 16 V0.75 H17.25 V16 Z" fill="none" stroke="#555" stroke-width="1.5"/><path d="M5 1 V9 H13 V1 M9 1 V6" fill="none" stroke="#555" stroke-width="1.5"/></svg>
<div class="r" style="left:1712px;top:1065px;width:10px;height:1px;background:#444;"></div>
<div class="r" style="left:1728px;top:1066px;width:125px;height:1px;background:#b4b4b4;"></div>
<div class="r" style="left:1790px;top:1062px;width:1px;height:8px;background:#b4b4b4;"></div>
<div class="r" style="left:1775px;top:1059px;width:6px;height:14px;background:#707070;"></div>
<div class="r" style="left:1859px;top:1065px;width:10px;height:1px;background:#444;"></div>
<div class="r" style="left:1863px;top:1061px;width:1px;height:9px;background:#444;"></div>
<div class="t" style="left:1885px;top:1057px;font-size:12.4px;color:#444444;transform:scaleX(0.9570);transform-origin:0 0;">80%</div>
<div class="r" style="left:0px;top:1078px;width:1920px;height:2px;background:#2f2f2f;"></div>
<div class="r" style="left:60px;top:1078px;width:430px;height:2px;background:#c8c8c8;"></div>
</body></html>
